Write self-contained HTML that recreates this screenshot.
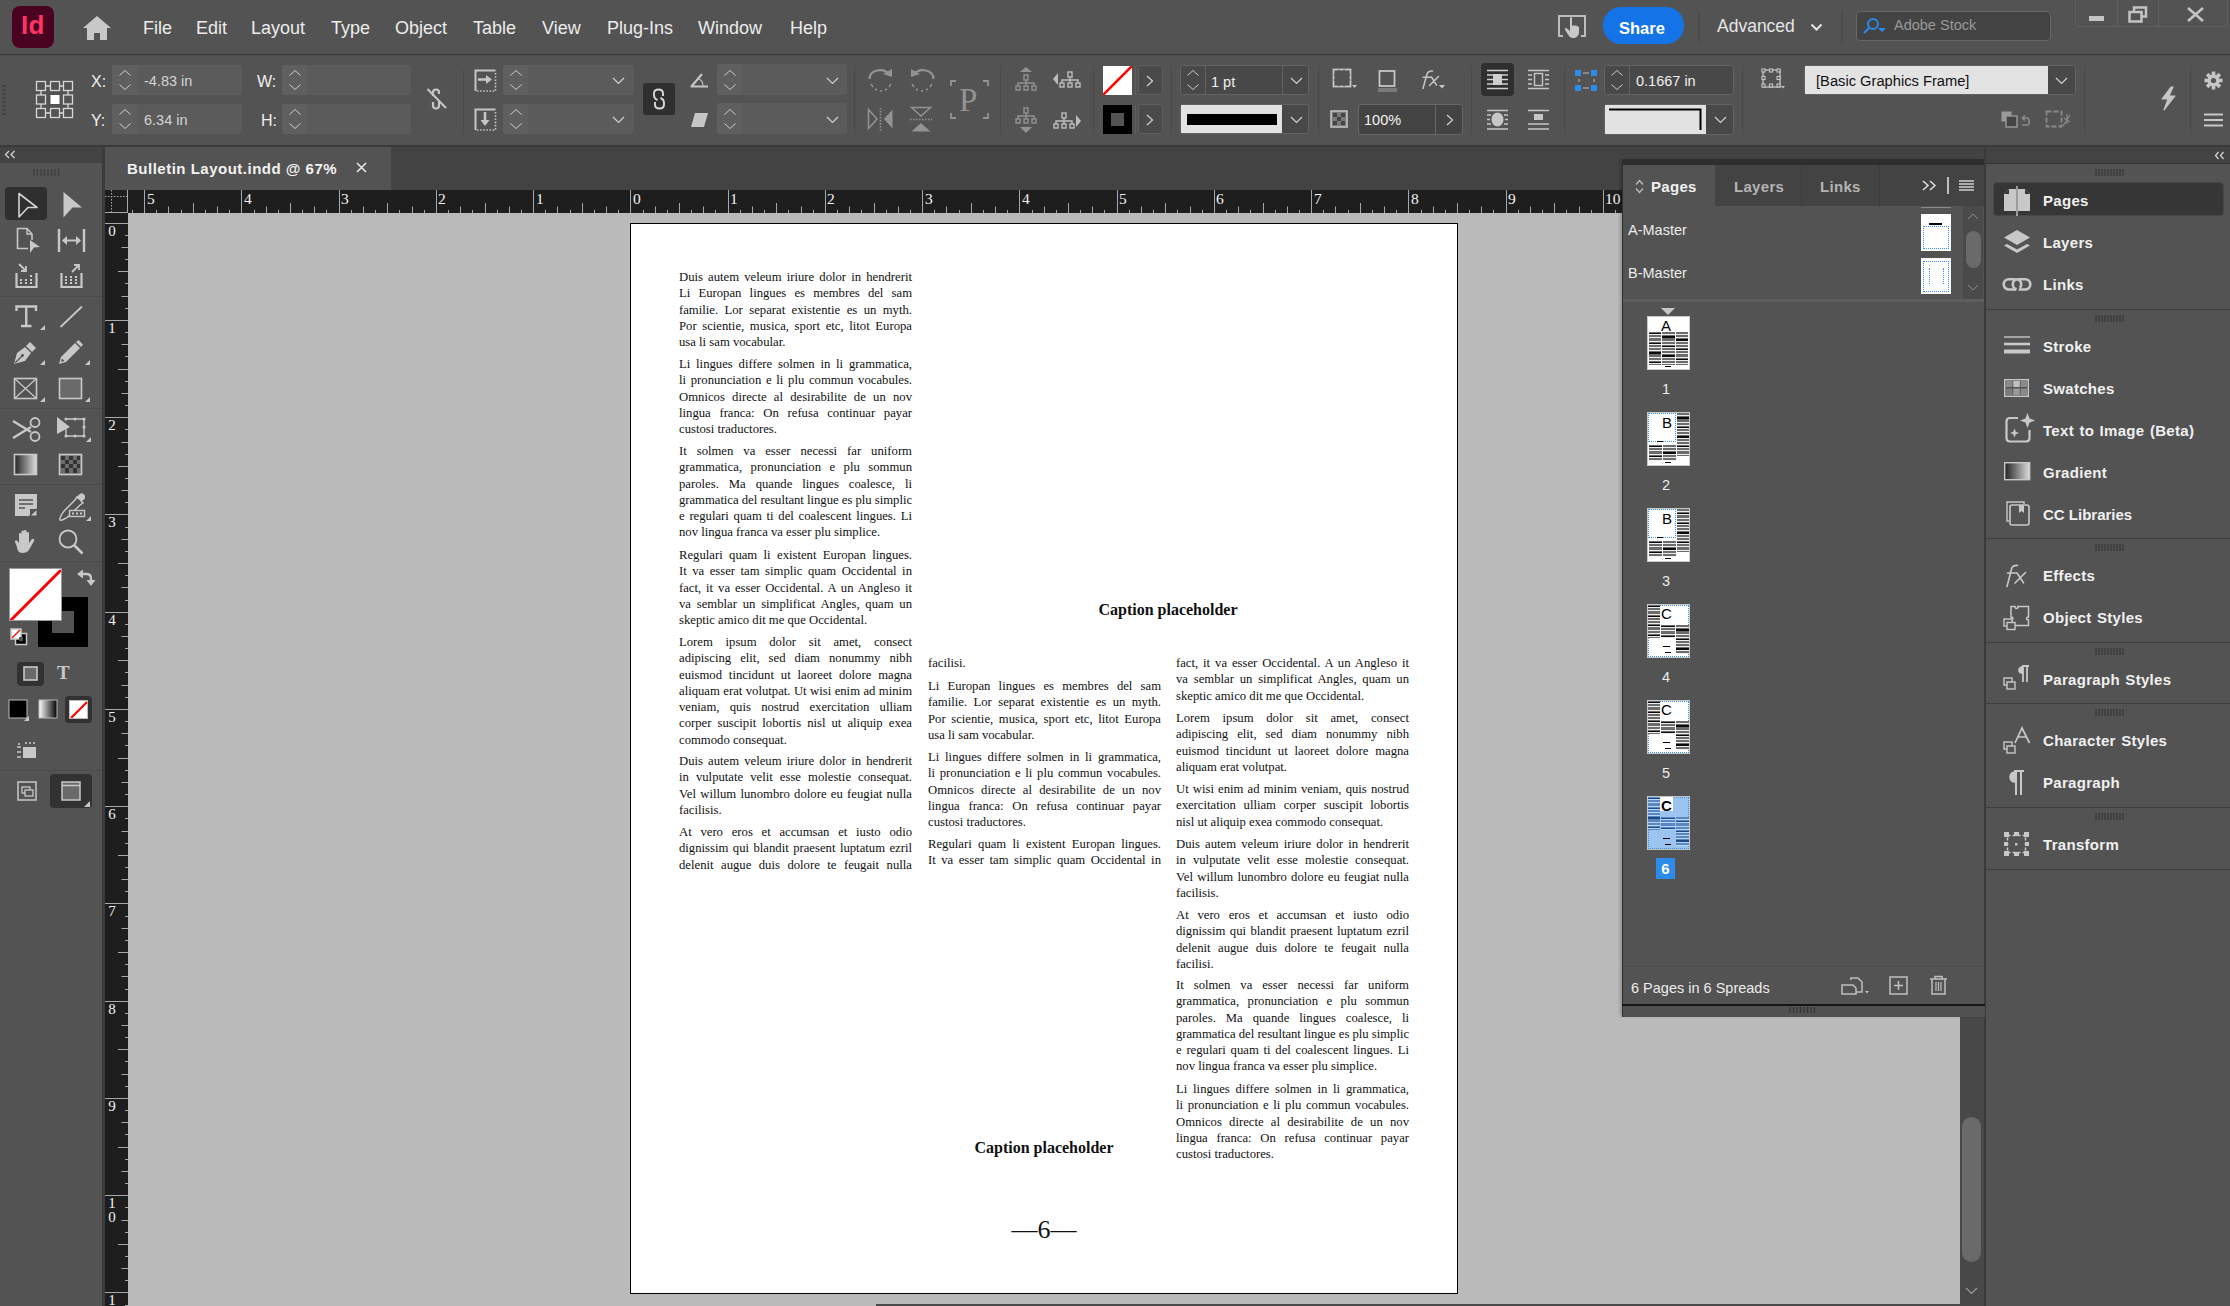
<!DOCTYPE html>
<html><head><meta charset="utf-8">
<style>
*{margin:0;padding:0;box-sizing:border-box}
html,body{width:2230px;height:1306px;overflow:hidden;background:#535353;font-family:"Liberation Sans",sans-serif;color:#e6e6e6}
.a{position:absolute}
.mi{position:absolute;top:18px;font-size:18px;color:#ececec;line-height:20px;white-space:nowrap}
.fld{position:absolute;background:#5b5b5b;border-radius:3px}
.spin{position:absolute;left:0;top:0;bottom:0;width:25px;background:#5f5f5f;border-radius:3px 0 0 3px}
.sep{position:absolute;width:1px;background:#4a4a4a}
.ico{position:absolute}
svg{position:absolute;overflow:visible}
.pg{position:absolute;font-family:"Liberation Serif",serif;color:#111;white-space:nowrap;font-size:12.7px;line-height:16px}
.j{text-align:justify;text-align-last:justify}
.dk{position:absolute;font-size:15px;font-weight:bold;color:#f0f0f0;white-space:nowrap;letter-spacing:0.3px;word-spacing:1px;margin-top:1px}
</style></head><body>
<!-- MENU BAR -->
<div class="a" style="left:0;top:0;width:2230px;height:54px;background:#535353"></div>
<div class="a" style="left:0;top:54px;width:2230px;height:1px;background:#383838"></div><div class="a" style="left:0;top:55px;width:2230px;height:1px;background:#4c4c4c"></div>
<div class="a" style="left:12px;top:6px;width:42px;height:42px;background:#49021f;border-radius:8px"></div>
<div class="a" style="left:21px;top:10px;font-size:26px;font-weight:bold;color:#ff3366;line-height:30px;letter-spacing:0.3px">Id</div>
<svg style="left:82px;top:15px" width="30" height="26" viewBox="0 0 30 26"><path d="M15 1 L1 13 L5 13 L5 25 L12 25 L12 18 L18 18 L18 25 L25 25 L25 13 L29 13 Z" fill="#c8c8c8"/></svg>
<div class="mi" style="left:143px">File</div>
<div class="mi" style="left:196px">Edit</div>
<div class="mi" style="left:251px">Layout</div>
<div class="mi" style="left:331px">Type</div>
<div class="mi" style="left:395px">Object</div>
<div class="mi" style="left:473px">Table</div>
<div class="mi" style="left:542px">View</div>
<div class="mi" style="left:607px">Plug-Ins</div>
<div class="mi" style="left:698px">Window</div>
<div class="mi" style="left:790px">Help</div>
<!-- right side -->
<svg style="left:1558px;top:14px" width="28" height="24" viewBox="0 0 28 24"><path d="M5 2 H1 V22 H5 M23 2 H27 V22 H23" stroke="#bdbdbd" stroke-width="2" fill="none"/><path d="M1 2 H27" stroke="#bdbdbd" stroke-width="2"/><path d="M12 4 C12 3 14 3 14 4 L14 12 C15 11 16 11 16.5 12 C17.5 11 18.5 11 19 12.5 C20 12 21 12.5 21 13.5 L21 18 C21 22 18 24 15 24 C12 24 11 22 9 19 L7 15.5 C6.5 14.5 7.5 13.5 8.5 14.3 L12 17 Z" fill="#c8c8c8"/></svg>
<div class="a" style="left:1603px;top:7px;width:81px;height:37px;background:#1473e6;border-radius:18px"></div>
<div class="a" style="left:1619px;top:18px;font-size:16.5px;font-weight:bold;color:#fff;line-height:20px">Share</div>
<div class="a" style="left:1698px;top:12px;width:2px;height:30px;background:#4b4b4b"></div>
<div class="a" style="left:1717px;top:16px;font-size:17.5px;color:#e6e6e6;line-height:20px">Advanced</div>
<svg style="left:1810px;top:23px" width="13" height="9" viewBox="0 0 13 9"><path d="M1.5 1.5 L6.5 6.5 L11.5 1.5" stroke="#e6e6e6" stroke-width="2" fill="none"/></svg>
<div class="a" style="left:1841px;top:12px;width:2px;height:30px;background:#4b4b4b"></div>
<div class="a" style="left:1856px;top:11px;width:195px;height:30px;background:#434343;border:1px solid #676767;border-radius:4px"></div>
<svg style="left:1863px;top:17px" width="26" height="18" viewBox="0 0 26 18"><circle cx="10" cy="7" r="5" stroke="#2b8ae8" stroke-width="2" fill="none"/><path d="M6.5 10.5 L1 16" stroke="#2b8ae8" stroke-width="2.2"/><path d="M15 11 L23 11 L19 15 Z" fill="#2b8ae8"/></svg>
<div class="a" style="left:1894px;top:16px;font-size:14.5px;color:#9a9a9a;line-height:18px">Adobe Stock</div>
<div class="a" style="left:2075px;top:-1px;width:153px;height:28px;border:1px solid #5f5f5f;border-radius:0 0 4px 4px"></div>
<div class="a" style="left:2117px;top:0;width:1px;height:27px;background:#5f5f5f"></div>
<div class="a" style="left:2158px;top:0;width:1px;height:27px;background:#5f5f5f"></div>
<div class="a" style="left:2089px;top:16px;width:15px;height:5px;background:#c4c4c4"></div>
<svg style="left:2128px;top:6px" width="20" height="17" viewBox="0 0 20 17"><rect x="6" y="1.5" width="12" height="9" stroke="#c4c4c4" stroke-width="2.5" fill="none"/><rect x="1.5" y="6" width="12" height="9.5" stroke="#c4c4c4" stroke-width="2.5" fill="#535353"/></svg>
<svg style="left:2186px;top:7px" width="19" height="15" viewBox="0 0 19 15"><path d="M2 1 L17 14 M17 1 L2 14" stroke="#c4c4c4" stroke-width="2.6"/></svg>
<!-- CONTROL BAR -->
<div class="a" style="left:0;top:56px;width:2230px;height:89px;background:#535353"></div>
<div class="a" style="left:0;top:145px;width:2230px;height:2px;background:#3a3a3a"></div>
<svg style="left:2px;top:85px" width="4" height="31" viewBox="0 0 4 31"><path d="M0.5 1 H3.5 M0.5 5 H3.5 M0.5 9 H3.5 M0.5 13 H3.5 M0.5 17 H3.5 M0.5 21 H3.5 M0.5 25 H3.5 M0.5 29 H3.5" stroke="#3f3f3f" stroke-width="1.3"/></svg>
<!-- reference point -->
<svg style="left:35px;top:80px" width="40" height="39" viewBox="0 0 40 39"><g stroke="#d8d8d8" stroke-width="1.3" fill="none"><rect x="1.5" y="1.5" width="9" height="9"/><rect x="15.5" y="1.5" width="9" height="9"/><rect x="28.5" y="1.5" width="9" height="9"/><rect x="1.5" y="15" width="9" height="9"/><rect x="28.5" y="15" width="9" height="9"/><rect x="1.5" y="28.5" width="9" height="9"/><rect x="15.5" y="28.5" width="9" height="9"/><rect x="28.5" y="28.5" width="9" height="9"/><path d="M10.5 6 H15.5 M24.5 6 H28.5 M10.5 33 H15.5 M24.5 33 H28.5 M6 10.5 V15 M6 24 V28.5 M33 10.5 V15 M33 24 V28.5"/></g><rect x="15.5" y="15" width="9" height="9" fill="#ffffff"/></svg>
<div class="a" style="left:91px;top:73px;font-size:16px;color:#f0f0f0">X:</div>
<div class="a" style="left:91px;top:112px;font-size:16px;color:#f0f0f0">Y:</div>
<div class="fld" style="left:112px;top:65px;width:130px;height:30px"><div class="spin"></div></div>
<div class="fld" style="left:112px;top:104px;width:130px;height:30px"><div class="spin"></div></div>
<svg style="left:118px;top:69px" width="14" height="22" viewBox="0 0 14 22"><path d="M1.5 6.5 L7 1.5 L12.5 6.5 M1.5 15.5 L7 20.5 L12.5 15.5" stroke="#cfcfcf" stroke-width="1" fill="none"/></svg>
<svg style="left:118px;top:108px" width="14" height="22" viewBox="0 0 14 22"><path d="M1.5 6.5 L7 1.5 L12.5 6.5 M1.5 15.5 L7 20.5 L12.5 15.5" stroke="#cfcfcf" stroke-width="1" fill="none"/></svg>
<div class="a" style="left:144px;top:72px;font-size:14.5px;color:#d4d4d4;line-height:18px">-4.83 in</div>
<div class="a" style="left:144px;top:111px;font-size:14.5px;color:#d4d4d4;line-height:18px">6.34 in</div>
<div class="a" style="left:257px;top:73px;font-size:16px;color:#f0f0f0">W:</div>
<div class="a" style="left:261px;top:112px;font-size:16px;color:#f0f0f0">H:</div>
<div class="fld" style="left:282px;top:65px;width:129px;height:30px"><div class="spin"></div></div>
<div class="fld" style="left:282px;top:104px;width:129px;height:30px"><div class="spin"></div></div>
<svg style="left:288px;top:69px" width="14" height="22" viewBox="0 0 14 22"><path d="M1.5 6.5 L7 1.5 L12.5 6.5 M1.5 15.5 L7 20.5 L12.5 15.5" stroke="#cfcfcf" stroke-width="1" fill="none"/></svg>
<svg style="left:288px;top:108px" width="14" height="22" viewBox="0 0 14 22"><path d="M1.5 6.5 L7 1.5 L12.5 6.5 M1.5 15.5 L7 20.5 L12.5 15.5" stroke="#cfcfcf" stroke-width="1" fill="none"/></svg>
<svg style="left:426px;top:86px" width="22" height="26" viewBox="0 0 22 26"><path d="M7 10 V6.5 C7 2.5 13 2.5 13 6.5 V8 M7 16 V19.5 C7 23.5 13 23.5 13 19.5 V15" stroke="#c6c6c6" stroke-width="2.2" fill="none"/><path d="M1.5 3 L20 22" stroke="#c6c6c6" stroke-width="2"/></svg>
<div class="sep" style="left:463px;top:70px;height:65px"></div>
<!-- scale -->
<svg style="left:474px;top:69px" width="24" height="24" viewBox="0 0 24 24"><path d="M1.5 22 V1.5 H21.5" stroke="#c6c6c6" stroke-width="2" fill="none"/><path d="M21.5 4 V22 H1.5" stroke="#c6c6c6" stroke-width="1.6" stroke-dasharray="1.6 1.6" fill="none"/><path d="M4 10.5 H13" stroke="#c6c6c6" stroke-width="2.6"/><path d="M12 6 L18 10.5 L12 15 Z" fill="#c6c6c6"/></svg>
<svg style="left:474px;top:108px" width="24" height="24" viewBox="0 0 24 24"><path d="M1.5 22 V1.5 H21.5" stroke="#c6c6c6" stroke-width="2" fill="none"/><path d="M21.5 4 V22 H1.5" stroke="#c6c6c6" stroke-width="1.6" stroke-dasharray="1.6 1.6" fill="none"/><path d="M11 4 V13" stroke="#c6c6c6" stroke-width="2.6"/><path d="M6.5 12 L11 18 L15.5 12 Z" fill="#c6c6c6"/></svg>
<div class="fld" style="left:503px;top:65px;width:131px;height:30px"><div class="spin"></div></div>
<div class="fld" style="left:503px;top:104px;width:131px;height:30px"><div class="spin"></div></div>
<svg style="left:509px;top:69px" width="14" height="22" viewBox="0 0 14 22"><path d="M1.5 6.5 L7 1.5 L12.5 6.5 M1.5 15.5 L7 20.5 L12.5 15.5" stroke="#cfcfcf" stroke-width="1" fill="none"/></svg>
<svg style="left:509px;top:108px" width="14" height="22" viewBox="0 0 14 22"><path d="M1.5 6.5 L7 1.5 L12.5 6.5 M1.5 15.5 L7 20.5 L12.5 15.5" stroke="#cfcfcf" stroke-width="1" fill="none"/></svg>
<svg style="left:612px;top:77px" width="13" height="8" viewBox="0 0 13 8"><path d="M1 1 L6.5 6.5 L12 1" stroke="#d0d0d0" stroke-width="1.2" fill="none"/></svg>
<svg style="left:612px;top:116px" width="13" height="8" viewBox="0 0 13 8"><path d="M1 1 L6.5 6.5 L12 1" stroke="#d0d0d0" stroke-width="1.2" fill="none"/></svg>
<div class="a" style="left:643px;top:83px;width:32px;height:32px;background:#2f2f2f;border-radius:3px"></div>
<svg style="left:652px;top:88px" width="14" height="22" viewBox="0 0 14 22"><path d="M5.5 12 C3 11 2 9.5 2 7 V5.5 C2 2.5 4 1.5 6.5 1.5 C9 1.5 11 2.5 11 5.5 V8" stroke="#d8d8d8" stroke-width="1.9" fill="none"/><path d="M8.5 10 C11 11 12 12.5 12 15 V16.5 C12 19.5 10 20.5 7.5 20.5 C5 20.5 3 19.5 3 16.5 V14" stroke="#d8d8d8" stroke-width="1.9" fill="none"/></svg>
<!-- rotate / shear -->
<svg style="left:690px;top:72px" width="19" height="16" viewBox="0 0 19 16"><path d="M1 15 L12 2 M1 14.5 H18" stroke="#c6c6c6" stroke-width="2.2" fill="none"/><path d="M8.5 7 C12 8 13 11 13 14" stroke="#c6c6c6" stroke-width="1.1" fill="none"/></svg>
<svg style="left:690px;top:112px" width="19" height="16" viewBox="0 0 19 16"><path d="M5 1 H18 L14 15 H1 Z" fill="#c6c6c6"/></svg>
<div class="fld" style="left:717px;top:64px;width:130px;height:31px"><div class="spin"></div></div>
<div class="fld" style="left:717px;top:103px;width:130px;height:31px"><div class="spin"></div></div>
<svg style="left:723px;top:69px" width="14" height="22" viewBox="0 0 14 22"><path d="M1.5 6.5 L7 1.5 L12.5 6.5 M1.5 15.5 L7 20.5 L12.5 15.5" stroke="#cfcfcf" stroke-width="1" fill="none"/></svg>
<svg style="left:723px;top:108px" width="14" height="22" viewBox="0 0 14 22"><path d="M1.5 6.5 L7 1.5 L12.5 6.5 M1.5 15.5 L7 20.5 L12.5 15.5" stroke="#cfcfcf" stroke-width="1" fill="none"/></svg>
<svg style="left:826px;top:77px" width="13" height="8" viewBox="0 0 13 8"><path d="M1 1 L6.5 6.5 L12 1" stroke="#d0d0d0" stroke-width="1.2" fill="none"/></svg>
<svg style="left:826px;top:116px" width="13" height="8" viewBox="0 0 13 8"><path d="M1 1 L6.5 6.5 L12 1" stroke="#d0d0d0" stroke-width="1.2" fill="none"/></svg>
<div class="sep" style="left:854px;top:65px;height:70px"></div>
<!-- rotate cw / ccw / flip -->
<svg style="left:868px;top:67px" width="26" height="26" viewBox="0 0 26 26"><path d="M1.5 12 C1.5 3 15 0 21 7" stroke="#939393" stroke-width="2.2" fill="none"/><path d="M15 7 L24 2 L24 10 Z" fill="#939393"/><path d="M3 17 L5 20 M7 22 L9 23 M12 24 H14 M17 23 L19 22 M21 20 L23 17" stroke="#939393" stroke-width="1.4"/></svg>
<svg style="left:909px;top:67px" width="26" height="26" viewBox="0 0 26 26"><path d="M24.5 12 C24.5 3 11 0 5 7" stroke="#939393" stroke-width="2.2" fill="none"/><path d="M11 7 L2 2 L2 10 Z" fill="#939393"/><path d="M23 17 L21 20 M19 22 L17 23 M14 24 H12 M9 23 L7 22 M5 20 L3 17" stroke="#939393" stroke-width="1.4"/></svg>
<svg style="left:867px;top:107px" width="27" height="25" viewBox="0 0 27 25"><path d="M1.5 2.5 L10 12 L1.5 21.5 Z" stroke="#939393" stroke-width="1.5" fill="none"/><path d="M25.5 2.5 L17 12 L25.5 21.5 Z" fill="#939393"/><path d="M13.5 1 V24" stroke="#939393" stroke-width="1.6" stroke-dasharray="1.5 1.5"/></svg>
<svg style="left:909px;top:106px" width="24" height="27" viewBox="0 0 24 27"><path d="M2.5 1.5 L12 10 L21.5 1.5 Z" stroke="#939393" stroke-width="1.5" fill="none"/><path d="M2.5 25.5 L12 17 L21.5 25.5 Z" fill="#939393"/><path d="M1 13.5 H23" stroke="#939393" stroke-width="1.6" stroke-dasharray="1.5 1.5"/></svg>
<svg style="left:950px;top:80px" width="39" height="39" viewBox="0 0 39 39"><path d="M1 6 V1 H6 M33 1 H38 V6 M1 33 V38 H6 M33 38 H38 V33" stroke="#939393" stroke-width="1.8" fill="none"/></svg>
<div class="a" style="left:959px;top:83px;font-family:'Liberation Serif',serif;font-size:33px;color:#939393;line-height:34px">P</div>
<div class="sep" style="left:1000px;top:65px;height:70px"></div>
<!-- select container -->
<svg style="left:1015px;top:67px" width="22" height="27" viewBox="0 0 22 27"><path d="M5 5 L11 0 L17 5 Z" fill="#939393"/><g stroke="#939393" stroke-width="1.4" fill="none"><rect x="9" y="8" width="4" height="5"/><path d="M11 13 V16 M3 19 V16 H19 V19 M11 16 V19"/><rect x="1" y="19" width="4" height="4"/><rect x="9" y="19" width="4" height="4"/><rect x="17" y="19" width="4" height="4"/></g></svg>
<svg style="left:1053px;top:71px" width="30" height="18" viewBox="0 0 30 18"><path d="M5 2 L0 8 L5 14 Z" fill="#bdbdbd"/><g stroke="#bdbdbd" stroke-width="1.4" fill="none"><rect x="15" y="1" width="4" height="5"/><path d="M17 6 V9 M9 12 V9 H25 V12 M17 9 V12"/><rect x="7" y="12" width="4" height="4"/><rect x="15" y="12" width="4" height="4"/><rect x="23" y="12" width="4" height="4"/></g></svg>
<svg style="left:1015px;top:107px" width="22" height="27" viewBox="0 0 22 27"><g stroke="#939393" stroke-width="1.4" fill="none"><rect x="9" y="1" width="4" height="5"/><path d="M11 6 V9 M3 12 V9 H19 V12 M11 9 V12"/><rect x="1" y="12" width="4" height="4"/><rect x="9" y="12" width="4" height="4"/><rect x="17" y="12" width="4" height="4"/></g><path d="M5 20 L11 26 L17 20 Z" fill="#939393"/></svg>
<svg style="left:1053px;top:112px" width="30" height="18" viewBox="0 0 30 18"><g stroke="#bdbdbd" stroke-width="1.4" fill="none"><rect x="9" y="1" width="4" height="5"/><path d="M11 6 V9 M3 12 V9 H19 V12 M11 9 V12"/><rect x="1" y="12" width="4" height="4"/><rect x="9" y="12" width="4" height="4"/><rect x="17" y="12" width="4" height="4"/></g><path d="M23 3 L28 9 L23 15 Z" fill="#bdbdbd"/></svg>
<div class="sep" style="left:1093px;top:65px;height:70px"></div>
<!-- fill/stroke -->
<div class="a" style="left:1103px;top:66px;width:29px;height:29px;background:#fff;overflow:hidden"><svg style="left:0;top:0" width="29" height="29"><path d="M0 29 L29 0" stroke="#ff0000" stroke-width="2.6"/></svg></div>
<div class="a" style="left:1135px;top:66px;width:1px;height:29px;background:#5e5e5e"></div>
<div class="a" style="left:1138px;top:65px;width:25px;height:30px;background:#4a4a4a;border:1px solid #5f5f5f;border-radius:3px"></div>
<svg style="left:1146px;top:75px" width="8" height="12" viewBox="0 0 8 12"><path d="M1 1 L6.5 6 L1 11" stroke="#d0d0d0" stroke-width="1.2" fill="none"/></svg>
<div class="a" style="left:1103px;top:105px;width:29px;height:29px;background:#000"></div>
<div class="a" style="left:1111px;top:113px;width:13px;height:13px;background:#535353"></div>
<div class="a" style="left:1135px;top:105px;width:1px;height:29px;background:#5e5e5e"></div>
<div class="a" style="left:1138px;top:104px;width:25px;height:30px;background:#4a4a4a;border:1px solid #5f5f5f;border-radius:3px"></div>
<svg style="left:1146px;top:114px" width="8" height="12" viewBox="0 0 8 12"><path d="M1 1 L6.5 6 L1 11" stroke="#d0d0d0" stroke-width="1.2" fill="none"/></svg>
<div class="sep" style="left:1171px;top:65px;height:70px"></div>
<!-- stroke weight -->
<div class="a" style="left:1180px;top:65px;width:129px;height:30px;background:#484848;border:1px solid #626262;border-radius:3px"></div>
<div class="a" style="left:1205px;top:66px;width:1px;height:28px;background:#626262"></div>
<div class="a" style="left:1282px;top:66px;width:1px;height:28px;background:#626262"></div>
<svg style="left:1186px;top:69px" width="14" height="22" viewBox="0 0 14 22"><path d="M1.5 6.5 L7 1.5 L12.5 6.5 M1.5 15.5 L7 20.5 L12.5 15.5" stroke="#cfcfcf" stroke-width="1" fill="none"/></svg>
<div class="a" style="left:1211px;top:72.5px;font-size:14.5px;color:#f0f0f0;line-height:18px">1 pt</div>
<svg style="left:1290px;top:77px" width="13" height="8" viewBox="0 0 13 8"><path d="M1 1 L6.5 6.5 L12 1" stroke="#d0d0d0" stroke-width="1.2" fill="none"/></svg>
<div class="a" style="left:1180px;top:104px;width:129px;height:30px;background:#484848;border:1px solid #626262;border-radius:3px"></div>
<div class="a" style="left:1181px;top:105px;width:101px;height:28px;background:#e2e2e2"></div>
<div class="a" style="left:1187px;top:114px;width:90px;height:11px;background:#000"></div>
<svg style="left:1290px;top:116px" width="13" height="8" viewBox="0 0 13 8"><path d="M1 1 L6.5 6.5 L12 1" stroke="#d0d0d0" stroke-width="1.2" fill="none"/></svg>
<div class="sep" style="left:1318px;top:65px;height:70px"></div>
<!-- frame fitting / shadow / fx -->
<svg style="left:1332px;top:68px" width="26" height="22" viewBox="0 0 26 22"><rect x="1.5" y="1.5" width="17" height="17" stroke="#c6c6c6" stroke-width="1.8" fill="none"/><path d="M7 1.5 V3.5 M12 1.5 V3.5 M7 18.5 V16.5 M12 18.5 V16.5 M1.5 7 H3.5 M1.5 12 H3.5 M18.5 7 H16.5 M18.5 12 H16.5" stroke="#535353" stroke-width="1.2"/><path d="M20 17 L25 17 L22.5 20 Z" fill="#c6c6c6"/></svg>
<svg style="left:1377px;top:69px" width="22" height="25" viewBox="0 0 22 25"><rect x="2.5" y="2" width="15" height="15" stroke="#c6c6c6" stroke-width="1.8" fill="none"/><rect x="1" y="19" width="19" height="4" fill="#7a7a7a"/></svg>
<svg style="left:1420px;top:69px" width="25" height="21" viewBox="0 0 25 21"><path d="M3 19.5 L7 5 C7.8 2.5 9.5 1.8 12.5 2 M3.2 8.2 H11 M9.5 16.5 L18.5 7.5 M11.5 8 L16.5 16.2" stroke="#c6c6c6" stroke-width="1.5" fill="none" stroke-linecap="round"/></svg>
<svg style="left:1439px;top:85px" width="6" height="4" viewBox="0 0 6 4"><path d="M0 0 L6 0 L3 3.5 Z" fill="#c6c6c6"/></svg>
<svg style="left:1330px;top:110px" width="18" height="18" viewBox="0 0 18 18"><rect x="1" y="1" width="16" height="16" stroke="#c6c6c6" stroke-width="1.5" fill="#7a7a7a"/><path d="M3 3 H7 V7 H3 Z M11 3 H15 V7 H11 Z M7 7 H11 V11 H7 Z M3 11 H7 V15 H3 Z M11 11 H15 V15 H11 Z" fill="#444"/></svg>
<div class="a" style="left:1358px;top:104px;width:105px;height:31px;background:#434343;border:1px solid #666;border-radius:3px"></div>
<div class="a" style="left:1435px;top:105px;width:1px;height:29px;background:#666"></div>
<div class="a" style="left:1364px;top:111px;font-size:14.5px;color:#f4f4f4;line-height:18px">100%</div>
<svg style="left:1446px;top:114px" width="8" height="12" viewBox="0 0 8 12"><path d="M1 1 L6.5 6 L1 11" stroke="#d0d0d0" stroke-width="1.2" fill="none"/></svg>
<div class="sep" style="left:1471px;top:65px;height:70px"></div>
<!-- text wrap -->
<div class="a" style="left:1481px;top:63px;width:33px;height:33px;background:#2f2f2f;border-radius:4px"></div>
<svg style="left:1486px;top:69px" width="23" height="22" viewBox="0 0 23 22"><path d="M1 1.5 H22 M1 6 H22 M1 10.5 H22 M1 15 H22 M1 19.5 H22" stroke="#d0d0d0" stroke-width="1.4"/><rect x="7" y="5" width="9" height="11" fill="#d0d0d0"/></svg>
<svg style="left:1527px;top:69px" width="23" height="22" viewBox="0 0 23 22"><path d="M1 1.5 H22 M1 19.5 H22 M1 6 H5 M18 6 H22 M1 10.5 H5 M18 10.5 H22 M1 15 H5 M18 15 H22" stroke="#c6c6c6" stroke-width="1.4"/><rect x="7.5" y="4.5" width="8" height="12" stroke="#c6c6c6" stroke-width="1.4" fill="none"/></svg>
<svg style="left:1486px;top:109px" width="23" height="22" viewBox="0 0 23 22"><path d="M1 1.5 H22 M1 20 H22 M1 6 H5 M18 6 H22 M1 10.5 H4 M19 10.5 H22 M1 15 H5 M18 15 H22" stroke="#c6c6c6" stroke-width="1.4"/><ellipse cx="11.5" cy="10.5" rx="6" ry="7" fill="#c6c6c6"/></svg>
<svg style="left:1527px;top:109px" width="23" height="22" viewBox="0 0 23 22"><path d="M1 1.5 H22 M1 15 H22 M1 20 H22" stroke="#c6c6c6" stroke-width="1.4"/><rect x="7" y="5" width="9" height="6" fill="#c6c6c6"/></svg>
<div class="sep" style="left:1564px;top:65px;height:70px"></div>
<svg style="left:1575px;top:70px" width="23" height="23" viewBox="0 0 23 23"><rect x="0" y="0" width="6" height="6" fill="#2d8ceb"/><rect x="16" y="0" width="6" height="6" fill="#2d8ceb"/><rect x="0" y="15" width="6" height="6" fill="#2d8ceb"/><rect x="16" y="15" width="6" height="6" fill="#2d8ceb"/><path d="M8 3 H14 M8 18 H14 M4 9 V12 M19 9 V12" stroke="#8a8a8a" stroke-width="2"/></svg>
<div class="a" style="left:1604px;top:65px;width:130px;height:30px;background:#484848;border:1px solid #626262;border-radius:3px"></div>
<div class="a" style="left:1629px;top:66px;width:1px;height:28px;background:#626262"></div>
<svg style="left:1610px;top:69px" width="14" height="22" viewBox="0 0 14 22"><path d="M1.5 6.5 L7 1.5 L12.5 6.5 M1.5 15.5 L7 20.5 L12.5 15.5" stroke="#cfcfcf" stroke-width="1" fill="none"/></svg>
<div class="a" style="left:1636px;top:72px;font-size:14.5px;color:#f0f0f0;line-height:18px">0.1667 in</div>
<div class="a" style="left:1604px;top:104px;width:130px;height:31px;background:#484848;border:1px solid #626262;border-radius:3px"></div>
<div class="a" style="left:1605px;top:105px;width:101px;height:29px;background:#e2e2e2"></div>
<svg style="left:1608px;top:108px" width="95" height="24" viewBox="0 0 95 24"><path d="M1 1.5 H92.5 V22" stroke="#000" stroke-width="2" fill="none"/></svg>
<svg style="left:1714px;top:116px" width="13" height="8" viewBox="0 0 13 8"><path d="M1 1 L6.5 6.5 L12 1" stroke="#d0d0d0" stroke-width="1.2" fill="none"/></svg>
<div class="sep" style="left:1742px;top:65px;height:70px"></div>
<svg style="left:1762px;top:69px" width="24" height="21" viewBox="0 0 24 21"><g stroke="#c6c6c6" stroke-width="1.3" fill="none"><rect x="1" y="1" width="17" height="17"/></g><g fill="#535353" stroke="#c6c6c6" stroke-width="1.1"><rect x="0" y="0" width="3" height="3"/><rect x="7.5" y="0" width="3" height="3"/><rect x="15" y="0" width="3" height="3"/><rect x="0" y="7.5" width="3" height="3"/><rect x="15" y="7.5" width="3" height="3"/><rect x="0" y="15" width="3" height="3"/><rect x="7.5" y="15" width="3" height="3"/><rect x="15" y="15" width="3" height="3"/></g><path d="M19 17 L23 17 L21 19.5 Z" fill="#c6c6c6"/></svg>
<div class="a" style="left:1804px;top:65px;width:272px;height:30px;background:#484848;border:1px solid #626262;border-radius:3px"></div>
<div class="a" style="left:1805px;top:66px;width:243px;height:28px;background:#e3e3e3"></div>
<div class="a" style="left:1816px;top:72px;font-size:14.7px;color:#111;line-height:18px">[Basic Graphics Frame]</div>
<svg style="left:2055px;top:77px" width="13" height="8" viewBox="0 0 13 8"><path d="M1 1 L6.5 6.5 L12 1" stroke="#d0d0d0" stroke-width="1.2" fill="none"/></svg>
<svg style="left:2000px;top:110px" width="32" height="20" viewBox="0 0 32 20"><rect x="1" y="1" width="11" height="11" fill="#9a9a9a" stroke="#555" stroke-width="1"/><rect x="6" y="6" width="11" height="11" fill="#444" stroke="#9a9a9a" stroke-width="1.4"/><path d="M22 8 H27 C30 8 30 15 27 15 H22 M22 8 L25 5.5 M22 8 L25 10.5" stroke="#8a8a8a" stroke-width="1.6" fill="none"/></svg>
<svg style="left:2045px;top:110px" width="27" height="20" viewBox="0 0 27 20"><rect x="1.5" y="1.5" width="15" height="15" stroke="#8a8a8a" stroke-width="1.8" fill="none" stroke-dasharray="5 2"/><path d="M18 16 L25 5 M19 8 L25 12 M22 4 V14" stroke="#8a8a8a" stroke-width="1.2"/></svg>
<div class="sep" style="left:2084px;top:65px;height:70px"></div>
<svg style="left:2159px;top:86px" width="19" height="25" viewBox="0 0 19 25"><path d="M12 1 L3 13 L9 13 L5 24 L16 10 L10 10 L14 1 Z" stroke="#c6c6c6" stroke-width="1.2" fill="#c6c6c6" stroke-linejoin="round"/></svg>
<div class="sep" style="left:2190px;top:65px;height:70px"></div>
<svg style="left:2204px;top:71px" width="19" height="19" viewBox="0 0 19 19"><g transform="translate(9.5 9.5)"><circle r="6" fill="#c6c6c6"/><g fill="#c6c6c6"><rect x="-1.8" y="-9" width="3.6" height="18"/><rect x="-9" y="-1.8" width="18" height="3.6"/><rect x="-1.8" y="-9" width="3.6" height="18" transform="rotate(45)"/><rect x="-1.8" y="-9" width="3.6" height="18" transform="rotate(-45)"/></g><circle r="2.6" fill="#535353"/></g></svg>
<svg style="left:2204px;top:113px" width="19" height="14" viewBox="0 0 19 14"><path d="M0 1.5 H19 M0 7 H19 M0 12.5 H19" stroke="#c6c6c6" stroke-width="1.8"/></svg>
<!-- DOC AREA -->
<div class="a" style="left:105px;top:147px;width:1880px;height:43px;background:#434343"></div>
<div class="a" style="left:105px;top:147px;width:286px;height:43px;background:#535353"></div>
<div class="a" style="left:127px;top:160px;font-size:15px;font-weight:bold;color:#f2f2f2;line-height:18px;letter-spacing:0.5px">Bulletin Layout.indd @ 67%</div>
<svg style="left:356px;top:162px" width="11" height="11" viewBox="0 0 11 11"><path d="M1 1 L10 10 M10 1 L1 10" stroke="#e8e8e8" stroke-width="1.6"/></svg>
<div class="a" style="left:128px;top:213px;width:1832px;height:1093px;background:#bababa"></div>
<div class="a" style="left:876px;top:1304px;width:1084px;height:2px;background:#4a4a4a"></div>
<div class="a" style="left:630px;top:223px;width:828px;height:1071px;background:#fff;border:1px solid #000"></div>
<!-- doc scrollbar -->
<div class="a" style="left:1960px;top:1016px;width:24px;height:290px;background:#484848"></div>
<div class="a" style="left:1962px;top:1117px;width:19px;height:145px;background:#6a6a6a;border-radius:10px"></div>
<svg style="left:1965px;top:1287px" width="13" height="8" viewBox="0 0 13 8"><path d="M1 1 L6.5 6.5 L12 1" stroke="#9a9a9a" stroke-width="1.2" fill="none"/></svg>
<div class="a" style="left:1984px;top:147px;width:2px;height:1159px;background:#3a3a3a"></div>
<!-- RULERS -->
<div class="a" style="left:105px;top:190px;width:1517px;height:23px;background:#1e1e1e"></div>
<div class="a" style="left:105px;top:190px;width:23px;height:1116px;background:#1e1e1e"></div>
<svg style="left:128px;top:190px" width="1494" height="23"><path d="M4.5 20 V23 M16.5 0 V23 M28.5 20 V23 M40.5 16.5 V23 M53.5 20 V23 M65.5 13 V23 M77.5 20 V23 M89.5 16.5 V23 M101.5 20 V23 M113.5 0 V23 M126.5 20 V23 M138.5 16.5 V23 M150.5 20 V23 M162.5 13 V23 M174.5 20 V23 M186.5 16.5 V23 M198.5 20 V23 M211.5 0 V23 M223.5 20 V23 M235.5 16.5 V23 M247.5 20 V23 M259.5 13 V23 M271.5 20 V23 M284.5 16.5 V23 M296.5 20 V23 M308.5 0 V23 M320.5 20 V23 M332.5 16.5 V23 M344.5 20 V23 M357.5 13 V23 M369.5 20 V23 M381.5 16.5 V23 M393.5 20 V23 M405.5 0 V23 M417.5 20 V23 M429.5 16.5 V23 M442.5 20 V23 M454.5 13 V23 M466.5 20 V23 M478.5 16.5 V23 M490.5 20 V23 M502.5 0 V23 M515.5 20 V23 M527.5 16.5 V23 M539.5 20 V23 M551.5 13 V23 M563.5 20 V23 M575.5 16.5 V23 M587.5 20 V23 M600.5 0 V23 M612.5 20 V23 M624.5 16.5 V23 M636.5 20 V23 M648.5 13 V23 M660.5 20 V23 M673.5 16.5 V23 M685.5 20 V23 M697.5 0 V23 M709.5 20 V23 M721.5 16.5 V23 M733.5 20 V23 M746.5 13 V23 M758.5 20 V23 M770.5 16.5 V23 M782.5 20 V23 M794.5 0 V23 M806.5 20 V23 M818.5 16.5 V23 M831.5 20 V23 M843.5 13 V23 M855.5 20 V23 M867.5 16.5 V23 M879.5 20 V23 M891.5 0 V23 M904.5 20 V23 M916.5 16.5 V23 M928.5 20 V23 M940.5 13 V23 M952.5 20 V23 M964.5 16.5 V23 M976.5 20 V23 M989.5 0 V23 M1001.5 20 V23 M1013.5 16.5 V23 M1025.5 20 V23 M1037.5 13 V23 M1049.5 20 V23 M1062.5 16.5 V23 M1074.5 20 V23 M1086.5 0 V23 M1098.5 20 V23 M1110.5 16.5 V23 M1122.5 20 V23 M1135.5 13 V23 M1147.5 20 V23 M1159.5 16.5 V23 M1171.5 20 V23 M1183.5 0 V23 M1195.5 20 V23 M1207.5 16.5 V23 M1220.5 20 V23 M1232.5 13 V23 M1244.5 20 V23 M1256.5 16.5 V23 M1268.5 20 V23 M1280.5 0 V23 M1293.5 20 V23 M1305.5 16.5 V23 M1317.5 20 V23 M1329.5 13 V23 M1341.5 20 V23 M1353.5 16.5 V23 M1365.5 20 V23 M1378.5 0 V23 M1390.5 20 V23 M1402.5 16.5 V23 M1414.5 20 V23 M1426.5 13 V23 M1438.5 20 V23 M1451.5 16.5 V23 M1463.5 20 V23 M1475.5 0 V23 M1487.5 20 V23" stroke="#a8a8a8" stroke-width="1"/></svg>
<svg style="left:105px;top:213px" width="23" height="1093"><path d="M0 10.5 H23 M20 22.5 H23 M16.5 34.5 H23 M20 46.5 H23 M13 58.5 H23 M20 70.5 H23 M16.5 83.5 H23 M20 95.5 H23 M0 107.5 H23 M20 119.5 H23 M16.5 131.5 H23 M20 143.5 H23 M13 156.5 H23 M20 168.5 H23 M16.5 180.5 H23 M20 192.5 H23 M0 204.5 H23 M20 216.5 H23 M16.5 229.5 H23 M20 241.5 H23 M13 253.5 H23 M20 265.5 H23 M16.5 277.5 H23 M20 289.5 H23 M0 301.5 H23 M20 314.5 H23 M16.5 326.5 H23 M20 338.5 H23 M13 350.5 H23 M20 362.5 H23 M16.5 374.5 H23 M20 387.5 H23 M0 399.5 H23 M20 411.5 H23 M16.5 423.5 H23 M20 435.5 H23 M13 447.5 H23 M20 459.5 H23 M16.5 472.5 H23 M20 484.5 H23 M0 496.5 H23 M20 508.5 H23 M16.5 520.5 H23 M20 532.5 H23 M13 545.5 H23 M20 557.5 H23 M16.5 569.5 H23 M20 581.5 H23 M0 593.5 H23 M20 605.5 H23 M16.5 618.5 H23 M20 630.5 H23 M13 642.5 H23 M20 654.5 H23 M16.5 666.5 H23 M20 678.5 H23 M0 690.5 H23 M20 703.5 H23 M16.5 715.5 H23 M20 727.5 H23 M13 739.5 H23 M20 751.5 H23 M16.5 763.5 H23 M20 776.5 H23 M0 788.5 H23 M20 800.5 H23 M16.5 812.5 H23 M20 824.5 H23 M13 836.5 H23 M20 848.5 H23 M16.5 861.5 H23 M20 873.5 H23 M0 885.5 H23 M20 897.5 H23 M16.5 909.5 H23 M20 921.5 H23 M13 934.5 H23 M20 946.5 H23 M16.5 958.5 H23 M20 970.5 H23 M0 982.5 H23 M20 994.5 H23 M16.5 1007.5 H23 M20 1019.5 H23 M13 1031.5 H23 M20 1043.5 H23 M16.5 1055.5 H23 M20 1067.5 H23 M0 1079.5 H23 M20 1092.5 H23" stroke="#a8a8a8" stroke-width="1"/></svg>
<div class="a" style="left:147px;top:190px;font-family:Liberation Serif,serif;font-size:15.5px;color:#f2f2f2;line-height:17px">5</div>
<div class="a" style="left:244px;top:190px;font-family:Liberation Serif,serif;font-size:15.5px;color:#f2f2f2;line-height:17px">4</div>
<div class="a" style="left:341px;top:190px;font-family:Liberation Serif,serif;font-size:15.5px;color:#f2f2f2;line-height:17px">3</div>
<div class="a" style="left:438px;top:190px;font-family:Liberation Serif,serif;font-size:15.5px;color:#f2f2f2;line-height:17px">2</div>
<div class="a" style="left:536px;top:190px;font-family:Liberation Serif,serif;font-size:15.5px;color:#f2f2f2;line-height:17px">1</div>
<div class="a" style="left:633px;top:190px;font-family:Liberation Serif,serif;font-size:15.5px;color:#f2f2f2;line-height:17px">0</div>
<div class="a" style="left:730px;top:190px;font-family:Liberation Serif,serif;font-size:15.5px;color:#f2f2f2;line-height:17px">1</div>
<div class="a" style="left:827px;top:190px;font-family:Liberation Serif,serif;font-size:15.5px;color:#f2f2f2;line-height:17px">2</div>
<div class="a" style="left:925px;top:190px;font-family:Liberation Serif,serif;font-size:15.5px;color:#f2f2f2;line-height:17px">3</div>
<div class="a" style="left:1022px;top:190px;font-family:Liberation Serif,serif;font-size:15.5px;color:#f2f2f2;line-height:17px">4</div>
<div class="a" style="left:1119px;top:190px;font-family:Liberation Serif,serif;font-size:15.5px;color:#f2f2f2;line-height:17px">5</div>
<div class="a" style="left:1216px;top:190px;font-family:Liberation Serif,serif;font-size:15.5px;color:#f2f2f2;line-height:17px">6</div>
<div class="a" style="left:1314px;top:190px;font-family:Liberation Serif,serif;font-size:15.5px;color:#f2f2f2;line-height:17px">7</div>
<div class="a" style="left:1411px;top:190px;font-family:Liberation Serif,serif;font-size:15.5px;color:#f2f2f2;line-height:17px">8</div>
<div class="a" style="left:1508px;top:190px;font-family:Liberation Serif,serif;font-size:15.5px;color:#f2f2f2;line-height:17px">9</div>
<div class="a" style="left:1605px;top:190px;font-family:Liberation Serif,serif;font-size:15.5px;color:#f2f2f2;line-height:17px">10</div>
<div class="a" style="left:106px;top:225px;font-family:Liberation Serif,serif;font-size:15px;color:#f2f2f2;line-height:13.5px;width:12px;text-align:center">0</div>
<div class="a" style="left:106px;top:322px;font-family:Liberation Serif,serif;font-size:15px;color:#f2f2f2;line-height:13.5px;width:12px;text-align:center">1</div>
<div class="a" style="left:106px;top:419px;font-family:Liberation Serif,serif;font-size:15px;color:#f2f2f2;line-height:13.5px;width:12px;text-align:center">2</div>
<div class="a" style="left:106px;top:516px;font-family:Liberation Serif,serif;font-size:15px;color:#f2f2f2;line-height:13.5px;width:12px;text-align:center">3</div>
<div class="a" style="left:106px;top:614px;font-family:Liberation Serif,serif;font-size:15px;color:#f2f2f2;line-height:13.5px;width:12px;text-align:center">4</div>
<div class="a" style="left:106px;top:711px;font-family:Liberation Serif,serif;font-size:15px;color:#f2f2f2;line-height:13.5px;width:12px;text-align:center">5</div>
<div class="a" style="left:106px;top:808px;font-family:Liberation Serif,serif;font-size:15px;color:#f2f2f2;line-height:13.5px;width:12px;text-align:center">6</div>
<div class="a" style="left:106px;top:905px;font-family:Liberation Serif,serif;font-size:15px;color:#f2f2f2;line-height:13.5px;width:12px;text-align:center">7</div>
<div class="a" style="left:106px;top:1003px;font-family:Liberation Serif,serif;font-size:15px;color:#f2f2f2;line-height:13.5px;width:12px;text-align:center">8</div>
<div class="a" style="left:106px;top:1100px;font-family:Liberation Serif,serif;font-size:15px;color:#f2f2f2;line-height:13.5px;width:12px;text-align:center">9</div>
<div class="a" style="left:106px;top:1197px;font-family:Liberation Serif,serif;font-size:15px;color:#f2f2f2;line-height:13.5px;width:12px;text-align:center">1<br>0</div>
<div class="a" style="left:106px;top:1294px;font-family:Liberation Serif,serif;font-size:15px;color:#f2f2f2;line-height:13.5px;width:12px;text-align:center">1<br>1</div>
<svg style="left:105px;top:190px" width="23" height="23"><path d="M0 6.5 H22 M6.5 0 V22" stroke="#a8a8a8" stroke-width="1" stroke-dasharray="1.5 1.5"/><path d="M0 22.5 H23 M22.5 0 V23" stroke="#a8a8a8" stroke-width="1"/></svg>
<!-- LEFT TOOLBAR -->
<div class="a" style="left:0;top:147px;width:102px;height:1159px;background:#535353"></div>
<div class="a" style="left:0;top:147px;width:102px;height:16px;background:#434343"></div>
<svg style="left:4px;top:150px" width="12" height="9" viewBox="0 0 12 9"><path d="M5 1 L1.5 4.5 L5 8 M10.5 1 L7 4.5 L10.5 8" stroke="#d8d8d8" stroke-width="1.2" fill="none"/></svg>
<div class="a" style="left:102px;top:147px;width:3px;height:1159px;background:#3b3b3b"></div>
<svg style="left:33px;top:169px" width="29" height="7" viewBox="0 0 29 7"><path d="M1 0 V7 M4.5 0 V7 M8 0 V7 M11.5 0 V7 M15 0 V7 M18.5 0 V7 M22 0 V7 M25.5 0 V7" stroke="#3c3c3c" stroke-width="1.2"/></svg>
<div class="a" style="left:5px;top:187px;width:42px;height:33px;background:#2f2f2f;border-radius:4px"></div>
<svg style="left:17px;top:192px" width="22" height="27" viewBox="0 0 22 27"><path d="M2 1.5 L20 15.5 L11 15.5 L2 25 Z" stroke="#d4d4d4" stroke-width="1.6" fill="none" stroke-linejoin="round"/></svg>
<svg style="left:62px;top:191px" width="22" height="28" viewBox="0 0 22 28"><path d="M1.5 1 L20 16.5 L10.5 16.5 L1.5 26.5 Z" fill="#c8c8c8"/></svg>
<!-- page tool / gap tool -->
<svg style="left:16px;top:227px" width="25" height="26" viewBox="0 0 25 26"><path d="M12 21.5 H1.5 V1.5 H11 L16 7 V13" stroke="#c8c8c8" stroke-width="1.6" fill="none"/><path d="M11 1.5 V7 H16" stroke="#c8c8c8" stroke-width="1.4" fill="none"/><path d="M14 13 L24 20 L18 20.5 L14 26 Z" fill="#c8c8c8"/></svg>
<svg style="left:57px;top:229px" width="29" height="23" viewBox="0 0 29 23"><path d="M2 0 V23 M27 0 V23" stroke="#c8c8c8" stroke-width="2.4"/><path d="M6 11.5 H23" stroke="#c8c8c8" stroke-width="2"/><path d="M5 11.5 L10 7 V16 Z M24 11.5 L19 7 V16 Z" fill="#c8c8c8"/></svg>
<!-- content collector/placer -->
<svg style="left:15px;top:263px" width="23" height="26" viewBox="0 0 23 26"><path d="M1.5 10 V24 H21.5 V10" stroke="#c8c8c8" stroke-width="2.2" fill="none"/><path d="M5 17 H7 M10 17 H12 M15 17 H17 M5 20 H7 M10 20 H12 M15 20 H17 M15 13 H17" stroke="#c8c8c8" stroke-width="2"/><path d="M4 1 L11 8 M11 3 V8 H6" stroke="#c8c8c8" stroke-width="1.8" fill="none"/></svg>
<svg style="left:60px;top:263px" width="23" height="26" viewBox="0 0 23 26"><path d="M1.5 10 V24 H21.5 V10" stroke="#c8c8c8" stroke-width="2.2" fill="none"/><path d="M5 14 H7 M10 14 H12 M15 14 H17 M5 17 H7 M10 17 H12 M15 17 H17 M5 20 H7 M10 20 H12 M15 20 H17" stroke="#c8c8c8" stroke-width="2"/><path d="M12 9 L19 2 M14 2 H19 V7" stroke="#c8c8c8" stroke-width="1.8" fill="none"/></svg>
<div class="a" style="left:0;top:296px;width:102px;height:1px;background:#4b4b4b"></div>
<!-- type / line -->
<svg style="left:15px;top:305px" width="32" height="27" viewBox="0 0 32 27"><path d="M1.5 6 V1.5 H21 V6 M11.25 1.5 V21 M6 21 H16.5" stroke="#c8c8c8" stroke-width="2.4" fill="none"/><path d="M25 25 L30 20 V25 Z" fill="#c8c8c8"/></svg>
<svg style="left:59px;top:305px" width="25" height="24" viewBox="0 0 25 24"><path d="M1.5 22 L23 1.5" stroke="#c8c8c8" stroke-width="1.8"/></svg>
<!-- pen / pencil -->
<svg style="left:13px;top:340px" width="34" height="27" viewBox="0 0 34 27"><path d="M1 24 L4 13 L12 7 L18 13 L12 21 Z" fill="#c8c8c8"/><path d="M13 6 L17 2 L23 8 L19 12 Z" fill="#c8c8c8"/><path d="M2 23 L9 16" stroke="#535353" stroke-width="1.2"/><circle cx="9.5" cy="15.5" r="1.4" fill="#535353"/><path d="M27 25 L32 20 V25 Z" fill="#c8c8c8"/></svg>
<svg style="left:58px;top:340px" width="34" height="27" viewBox="0 0 34 27"><path d="M1 24 L3 17 L17 3 L22 8 L8 22 Z" fill="#c8c8c8"/><path d="M18 2 L20.5 0 L25 4.5 L23 7 Z" fill="#c8c8c8"/><path d="M3 22 L4 18.5 L6.5 21 Z" fill="#535353"/><path d="M27 25 L32 20 V25 Z" fill="#c8c8c8"/></svg>
<!-- frame / rect -->
<svg style="left:13px;top:377px" width="34" height="27" viewBox="0 0 34 27"><rect x="1.5" y="1.5" width="22" height="20" stroke="#c8c8c8" stroke-width="1.6" fill="none"/><path d="M1.5 1.5 L23.5 21.5 M23.5 1.5 L1.5 21.5" stroke="#c8c8c8" stroke-width="1.2"/><path d="M27 25 L32 20 V25 Z" fill="#c8c8c8"/></svg>
<svg style="left:58px;top:377px" width="34" height="27" viewBox="0 0 34 27"><rect x="1.5" y="1.5" width="22" height="20" stroke="#c8c8c8" stroke-width="1.6" fill="#6a6a6a"/><path d="M27 25 L32 20 V25 Z" fill="#c8c8c8"/></svg>
<div class="a" style="left:0;top:408px;width:102px;height:1px;background:#4b4b4b"></div>
<!-- scissors / free transform -->
<svg style="left:12px;top:416px" width="30" height="27" viewBox="0 0 30 27"><circle cx="23" cy="6.5" r="4.5" stroke="#c8c8c8" stroke-width="1.8" fill="none"/><circle cx="23" cy="20.5" r="4.5" stroke="#c8c8c8" stroke-width="1.8" fill="none"/><path d="M1 5 L19 16 M1 22 L19 11" stroke="#c8c8c8" stroke-width="2.4"/></svg>
<svg style="left:56px;top:416px" width="36" height="28" viewBox="0 0 36 28"><path d="M1 1 L14 11 L1 18 Z" fill="#c8c8c8"/><path d="M10 3 H28 V20 H10 V13" stroke="#c8c8c8" stroke-width="1.4" fill="none"/><g fill="#c8c8c8"><circle cx="10" cy="3" r="1.6"/><circle cx="19" cy="3" r="1.6"/><circle cx="28" cy="3" r="1.6"/><circle cx="28" cy="11" r="1.6"/><circle cx="28" cy="20" r="1.6"/><circle cx="19" cy="20" r="1.6"/><circle cx="10" cy="20" r="1.6"/></g><path d="M30 26 L35 21 V26 Z" fill="#c8c8c8"/></svg>
<!-- gradient / feather -->
<svg style="left:13px;top:453px" width="26" height="24" viewBox="0 0 26 24"><defs><linearGradient id="g1" x1="0" x2="1"><stop offset="0" stop-color="#222"/><stop offset="1" stop-color="#ddd"/></linearGradient></defs><rect x="1.5" y="1.5" width="22" height="20" stroke="#c8c8c8" stroke-width="1.6" fill="url(#g1)"/></svg>
<svg style="left:58px;top:453px" width="26" height="24" viewBox="0 0 26 24"><rect x="1.5" y="1.5" width="22" height="20" stroke="#c8c8c8" stroke-width="1.6" fill="#6c6c6c"/><path d="M3 3 H7 V7 H3 Z M11 3 H15 V7 H11 Z M19 3 H22 V7 H19 Z M7 7 H11 V11 H7 Z M15 7 H19 V11 H15 Z M3 11 H7 V15 H3 Z M11 11 H15 V15 H11 Z M19 11 H22 V15 H19 Z M7 15 H11 V20 H7 Z M15 15 H19 V20 H15 Z" fill="#333"/></svg>
<div class="a" style="left:0;top:484px;width:102px;height:1px;background:#4b4b4b"></div>
<!-- note / eyedropper -->
<svg style="left:15px;top:494px" width="23" height="23" viewBox="0 0 23 23"><path d="M0 0 H22 V14 L14 22 H0 Z" fill="#c8c8c8"/><path d="M4 6 H18 M4 10 H18 M4 14 H10" stroke="#535353" stroke-width="1.6"/><path d="M15 22 V15 H22" fill="#535353"/><path d="M14.5 22 L22 14.5 V22 Z" fill="#535353"/><path d="M16 21.5 L21.5 16 V21.5 Z" fill="#c8c8c8"/></svg>
<svg style="left:57px;top:493px" width="35" height="30" viewBox="0 0 35 30"><path d="M23 2 C25 0 28 2 27 5 L24 8 L26 10 L23 12 L13 22 C10 25 4 28 3 27 C2 26 5 20 8 17 L18 7 L20 4 L22 6 Z" stroke="#c8c8c8" stroke-width="1.5" fill="none"/><path d="M20 4 C22 0 27 0 28 4 C28 6 26 7 24 8 Z" fill="#c8c8c8"/><rect x="12.5" y="17.5" width="15" height="6" stroke="#c8c8c8" stroke-width="1.4" fill="#535353"/><path d="M15 20.5 H17 M19 20.5 H21 M23 20.5 H25" stroke="#c8c8c8" stroke-width="2"/><path d="M29 28 L34 23 V28 Z" fill="#c8c8c8"/></svg>
<!-- hand / zoom -->
<svg style="left:13px;top:529px" width="25" height="25" viewBox="0 0 25 25"><path d="M6 14 V5 C6 3.5 8.5 3.5 8.5 5 V11 V2.5 C8.5 1 11 1 11 2.5 V11 V2 C11 0.5 13.5 0.5 13.5 2 V11 V4 C13.5 2.5 16 2.5 16 4 V14 L18.5 10.5 C19.5 9 22 10 21 12 L16.5 20 C15 23 12 24 9.5 24 C6 24 4 21 4 18 L2 13 C1.5 11.5 3.5 10.5 4.5 12 Z" fill="#c8c8c8"/></svg>
<svg style="left:58px;top:529px" width="26" height="26" viewBox="0 0 26 26"><circle cx="10" cy="10" r="8.5" stroke="#c8c8c8" stroke-width="1.8" fill="none"/><path d="M16 16 L24.5 24.5" stroke="#c8c8c8" stroke-width="2.6"/></svg>
<div class="a" style="left:0;top:561px;width:102px;height:1px;background:#4b4b4b"></div>
<!-- fill/stroke -->
<div class="a" style="left:38px;top:597px;width:50px;height:50px;background:#000"></div>
<div class="a" style="left:52px;top:611px;width:22px;height:22px;background:#535353"></div>
<div class="a" style="left:9px;top:568px;width:53px;height:53px;background:#fff;border:1px solid #9a9a9a;overflow:hidden"><svg style="left:0;top:0" width="53" height="53"><path d="M1 51 L50 2" stroke="#ff0000" stroke-width="3" stroke-linecap="round"/></svg></div>
<svg style="left:76px;top:569px" width="19" height="18" viewBox="0 0 19 18"><path d="M5 5 H11 C14 5 15 7 15 10 V12" stroke="#c8c8c8" stroke-width="2.4" fill="none"/><path d="M1 5 L7 0.5 V9.5 Z" fill="#c8c8c8"/><path d="M10.5 11 H19.5 L15 17 Z" fill="#c8c8c8"/></svg>
<svg style="left:9px;top:627px" width="20" height="20" viewBox="0 0 20 20"><rect x="6.5" y="6.5" width="11" height="11" fill="#000" stroke="#c8c8c8" stroke-width="1.5"/><rect x="2" y="2" width="10" height="10" fill="#fff" stroke="#c8c8c8" stroke-width="1.5"/><path d="M3 11 L11 3" stroke="#ff0000" stroke-width="1.3"/><rect x="10" y="10" width="4" height="4" fill="#535353"/></svg>
<div class="a" style="left:17px;top:662px;width:27px;height:24px;background:#323232;border-radius:4px"></div>
<svg style="left:22px;top:665px" width="17" height="17" viewBox="0 0 17 17"><rect x="2" y="2" width="13" height="13" stroke="#c8c8c8" stroke-width="1.6" fill="#6a6a6a"/></svg>
<div class="a" style="left:57px;top:663px;font-family:'Liberation Serif',serif;font-weight:bold;font-size:19px;color:#c8c8c8;line-height:20px">T</div>
<svg style="left:8px;top:699px" width="22" height="23" viewBox="0 0 22 23"><rect x="1" y="1" width="18" height="18" fill="#000" stroke="#bbb" stroke-width="1"/><path d="M16 22 L21 17 V22 Z" fill="#c8c8c8"/></svg>
<svg style="left:38px;top:699px" width="20" height="20" viewBox="0 0 20 20"><defs><linearGradient id="g2" x1="0" x2="1"><stop offset="0" stop-color="#fff"/><stop offset="1" stop-color="#000"/></linearGradient></defs><rect x="1" y="1" width="18" height="18" fill="url(#g2)" stroke="#bbb" stroke-width="1"/></svg>
<div class="a" style="left:65px;top:696px;width:27px;height:27px;background:#323232;border-radius:4px"></div>
<div class="a" style="left:69px;top:700px;width:19px;height:19px;background:#fff;border:1px solid #bbb;overflow:hidden"><svg style="left:0;top:0" width="19" height="19"><path d="M1 17 L17 1" stroke="#ff0000" stroke-width="2.2"/></svg></div>
<svg style="left:16px;top:741px" width="22" height="18" viewBox="0 0 22 18"><rect x="7" y="6" width="13" height="11" fill="#c8c8c8"/><path d="M1 6 H5 M1 11 H5 M1 16 H5 M3 2 V4 M10 1 V3 M14 1 V3 M18 1 V3" stroke="#c8c8c8" stroke-width="1.6"/></svg>
<div class="a" style="left:0;top:770px;width:102px;height:1px;background:#4b4b4b"></div>
<svg style="left:17px;top:781px" width="20" height="20" viewBox="0 0 20 20"><rect x="1" y="1" width="18" height="18" stroke="#c8c8c8" stroke-width="1.5" fill="none"/><rect x="5" y="6" width="8" height="6" stroke="#c8c8c8" stroke-width="1.3" fill="#535353"/><rect x="8" y="9" width="8" height="6" stroke="#c8c8c8" stroke-width="1.3" fill="#535353"/></svg>
<div class="a" style="left:50px;top:774px;width:42px;height:34px;background:#323232;border-radius:4px"></div>
<svg style="left:61px;top:781px" width="20" height="20" viewBox="0 0 20 20"><rect x="1" y="1" width="18" height="18" stroke="#c8c8c8" stroke-width="1.5" fill="#6a6a6a"/><path d="M1 4.5 H19" stroke="#c8c8c8" stroke-width="1.5"/></svg>
<svg style="left:84px;top:801px" width="6" height="6" viewBox="0 0 6 6"><path d="M0 6 L6 0 V6 Z" fill="#c8c8c8"/></svg>
<!-- PAGE TEXT -->
<div class="pg j" style="left:679px;top:269.00px;width:233px">Duis autem veleum iriure dolor in hendrerit</div>
<div class="pg j" style="left:679px;top:285.25px;width:233px">Li Europan lingues es membres del sam</div>
<div class="pg j" style="left:679px;top:301.50px;width:233px">familie. Lor separat existentie es un myth.</div>
<div class="pg j" style="left:679px;top:317.75px;width:233px">Por scientie, musica, sport etc, litot Europa</div>
<div class="pg" style="left:679px;top:334.00px;width:233px">usa li sam vocabular.</div>
<div class="pg j" style="left:679px;top:356.00px;width:233px">Li lingues differe solmen in li grammatica,</div>
<div class="pg j" style="left:679px;top:372.25px;width:233px">li pronunciation e li plu commun vocabules.</div>
<div class="pg j" style="left:679px;top:388.50px;width:233px">Omnicos directe al desirabilite de un nov</div>
<div class="pg j" style="left:679px;top:404.75px;width:233px">lingua franca: On refusa continuar payar</div>
<div class="pg" style="left:679px;top:421.00px;width:233px">custosi traductores.</div>
<div class="pg j" style="left:679px;top:443.00px;width:233px">It solmen va esser necessi far uniform</div>
<div class="pg j" style="left:679px;top:459.25px;width:233px">grammatica, pronunciation e plu sommun</div>
<div class="pg j" style="left:679px;top:475.50px;width:233px">paroles. Ma quande lingues coalesce, li</div>
<div class="pg j" style="left:679px;top:491.75px;width:233px;letter-spacing:-0.032px">grammatica del resultant lingue es plu simplic</div>
<div class="pg j" style="left:679px;top:508.00px;width:233px">e regulari quam ti del coalescent lingues. Li</div>
<div class="pg" style="left:679px;top:524.25px;width:233px">nov lingua franca va esser plu simplice.</div>
<div class="pg j" style="left:679px;top:547.00px;width:233px">Regulari quam li existent Europan lingues.</div>
<div class="pg j" style="left:679px;top:563.25px;width:233px">It va esser tam simplic quam Occidental in</div>
<div class="pg j" style="left:679px;top:579.50px;width:233px">fact, it va esser Occidental. A un Angleso it</div>
<div class="pg j" style="left:679px;top:595.75px;width:233px">va semblar un simplificat Angles, quam un</div>
<div class="pg" style="left:679px;top:612.00px;width:233px">skeptic amico dit me que Occidental.</div>
<div class="pg j" style="left:679px;top:634.00px;width:233px">Lorem ipsum dolor sit amet, consect</div>
<div class="pg j" style="left:679px;top:650.25px;width:233px">adipiscing elit, sed diam nonummy nibh</div>
<div class="pg j" style="left:679px;top:666.50px;width:233px">euismod tincidunt ut laoreet dolore magna</div>
<div class="pg j" style="left:679px;top:682.75px;width:233px">aliquam erat volutpat. Ut wisi enim ad minim</div>
<div class="pg j" style="left:679px;top:699.00px;width:233px">veniam, quis nostrud exercitation ulliam</div>
<div class="pg j" style="left:679px;top:715.25px;width:233px">corper suscipit lobortis nisl ut aliquip exea</div>
<div class="pg" style="left:679px;top:731.50px;width:233px">commodo consequat.</div>
<div class="pg j" style="left:679px;top:753.00px;width:233px">Duis autem veleum iriure dolor in hendrerit</div>
<div class="pg j" style="left:679px;top:769.25px;width:233px">in vulputate velit esse molestie consequat.</div>
<div class="pg j" style="left:679px;top:785.50px;width:233px">Vel willum lunombro dolore eu feugiat nulla</div>
<div class="pg" style="left:679px;top:801.75px;width:233px">facilisis.</div>
<div class="pg j" style="left:679px;top:824.00px;width:233px">At vero eros et accumsan et iusto odio</div>
<div class="pg j" style="left:679px;top:840.25px;width:233px">dignissim qui blandit praesent luptatum ezril</div>
<div class="pg j" style="left:679px;top:856.50px;width:233px">delenit augue duis dolore te feugait nulla</div>
<div class="pg" style="left:928px;top:655.00px;width:233px">facilisi.</div>
<div class="pg j" style="left:928px;top:678.00px;width:233px">Li Europan lingues es membres del sam</div>
<div class="pg j" style="left:928px;top:694.25px;width:233px">familie. Lor separat existentie es un myth.</div>
<div class="pg j" style="left:928px;top:710.50px;width:233px">Por scientie, musica, sport etc, litot Europa</div>
<div class="pg" style="left:928px;top:726.75px;width:233px">usa li sam vocabular.</div>
<div class="pg j" style="left:928px;top:749.00px;width:233px">Li lingues differe solmen in li grammatica,</div>
<div class="pg j" style="left:928px;top:765.25px;width:233px">li pronunciation e li plu commun vocabules.</div>
<div class="pg j" style="left:928px;top:781.50px;width:233px">Omnicos directe al desirabilite de un nov</div>
<div class="pg j" style="left:928px;top:797.75px;width:233px">lingua franca: On refusa continuar payar</div>
<div class="pg" style="left:928px;top:814.00px;width:233px">custosi traductores.</div>
<div class="pg j" style="left:928px;top:836.00px;width:233px">Regulari quam li existent Europan lingues.</div>
<div class="pg j" style="left:928px;top:852.25px;width:233px">It va esser tam simplic quam Occidental in</div>
<div class="pg j" style="left:1176px;top:655.00px;width:233px">fact, it va esser Occidental. A un Angleso it</div>
<div class="pg j" style="left:1176px;top:671.25px;width:233px">va semblar un simplificat Angles, quam un</div>
<div class="pg" style="left:1176px;top:687.50px;width:233px">skeptic amico dit me que Occidental.</div>
<div class="pg j" style="left:1176px;top:710.00px;width:233px">Lorem ipsum dolor sit amet, consect</div>
<div class="pg j" style="left:1176px;top:726.25px;width:233px">adipiscing elit, sed diam nonummy nibh</div>
<div class="pg j" style="left:1176px;top:742.50px;width:233px">euismod tincidunt ut laoreet dolore magna</div>
<div class="pg" style="left:1176px;top:758.75px;width:233px">aliquam erat volutpat.</div>
<div class="pg j" style="left:1176px;top:781.00px;width:233px">Ut wisi enim ad minim veniam, quis nostrud</div>
<div class="pg j" style="left:1176px;top:797.25px;width:233px">exercitation ulliam corper suscipit lobortis</div>
<div class="pg" style="left:1176px;top:813.50px;width:233px">nisl ut aliquip exea commodo consequat.</div>
<div class="pg j" style="left:1176px;top:836.00px;width:233px">Duis autem veleum iriure dolor in hendrerit</div>
<div class="pg j" style="left:1176px;top:852.25px;width:233px">in vulputate velit esse molestie consequat.</div>
<div class="pg j" style="left:1176px;top:868.50px;width:233px">Vel willum lunombro dolore eu feugiat nulla</div>
<div class="pg" style="left:1176px;top:884.75px;width:233px">facilisis.</div>
<div class="pg j" style="left:1176px;top:907.00px;width:233px">At vero eros et accumsan et iusto odio</div>
<div class="pg j" style="left:1176px;top:923.25px;width:233px">dignissim qui blandit praesent luptatum ezril</div>
<div class="pg j" style="left:1176px;top:939.50px;width:233px">delenit augue duis dolore te feugait nulla</div>
<div class="pg" style="left:1176px;top:955.75px;width:233px">facilisi.</div>
<div class="pg j" style="left:1176px;top:977.00px;width:233px">It solmen va esser necessi far uniform</div>
<div class="pg j" style="left:1176px;top:993.25px;width:233px">grammatica, pronunciation e plu sommun</div>
<div class="pg j" style="left:1176px;top:1009.50px;width:233px">paroles. Ma quande lingues coalesce, li</div>
<div class="pg j" style="left:1176px;top:1025.75px;width:233px;letter-spacing:-0.032px">grammatica del resultant lingue es plu simplic</div>
<div class="pg j" style="left:1176px;top:1042.00px;width:233px">e regulari quam ti del coalescent lingues. Li</div>
<div class="pg" style="left:1176px;top:1058.25px;width:233px">nov lingua franca va esser plu simplice.</div>
<div class="pg j" style="left:1176px;top:1081.00px;width:233px">Li lingues differe solmen in li grammatica,</div>
<div class="pg j" style="left:1176px;top:1097.25px;width:233px">li pronunciation e li plu commun vocabules.</div>
<div class="pg j" style="left:1176px;top:1113.50px;width:233px">Omnicos directe al desirabilite de un nov</div>
<div class="pg j" style="left:1176px;top:1129.75px;width:233px">lingua franca: On refusa continuar payar</div>
<div class="pg" style="left:1176px;top:1146.00px;width:233px">custosi traductores.</div>
<div class="a" style="left:1068px;top:601px;width:200px;text-align:center;font-family:'Liberation Serif',serif;font-weight:bold;font-size:16px;line-height:18px;color:#111;white-space:nowrap">Caption placeholder</div>
<div class="a" style="left:944px;top:1139px;width:200px;text-align:center;font-family:'Liberation Serif',serif;font-weight:bold;font-size:16px;line-height:18px;color:#111;white-space:nowrap">Caption placeholder</div>
<div class="a" style="left:944px;top:1216px;width:200px;text-align:center;font-family:'Liberation Serif',serif;font-size:26px;line-height:28px;color:#111;white-space:nowrap">—6—</div>
<!-- PAGES PANEL -->
<div class="a" style="left:1622px;top:159px;width:362px;height:858px;background:#535353;border-left:1px solid #2e2e2e;box-shadow:-3px 0 3px -1px rgba(0,0,0,0.2)"></div>
<div class="a" style="left:1622px;top:159px;width:362px;height:6px;background:#2e2e2e"></div>
<div class="a" style="left:1623px;top:165px;width:361px;height:41px;background:#434343"></div>
<div class="a" style="left:1623px;top:165px;width:92px;height:41px;background:#535353"></div>
<div class="a" style="left:1801px;top:165px;width:1px;height:41px;background:#3c3c3c"></div>
<div class="a" style="left:1879px;top:165px;width:1px;height:41px;background:#3c3c3c"></div>
<svg style="left:1635px;top:179px" width="9" height="15" viewBox="0 0 9 15"><path d="M1 5.5 L4.5 1.5 L8 5.5 M1 9.5 L4.5 13.5 L8 9.5" stroke="#bdbdbd" stroke-width="1.3" fill="none"/></svg>
<div class="dk" style="left:1651px;top:177px;line-height:18px">Pages</div>
<div class="dk" style="left:1734px;top:177px;line-height:18px;color:#b4b4b4">Layers</div>
<div class="dk" style="left:1820px;top:177px;line-height:18px;color:#b4b4b4">Links</div>
<svg style="left:1922px;top:180px" width="15" height="11" viewBox="0 0 15 11"><path d="M1 1 L6 5.5 L1 10 M8 1 L13 5.5 L8 10" stroke="#e0e0e0" stroke-width="1.5" fill="none"/></svg>
<div class="a" style="left:1947px;top:177px;width:2px;height:17px;background:#bdbdbd"></div>
<svg style="left:1959px;top:180px" width="15" height="12" viewBox="0 0 15 12"><path d="M0 1 H15 M0 4 H15 M0 7 H15 M0 10 H15" stroke="#d0d0d0" stroke-width="1.3"/></svg>
<div class="a" style="left:1628px;top:221px;font-size:14.5px;color:#ececec;line-height:18px">A-Master</div>
<div class="a" style="left:1628px;top:264px;font-size:14.5px;color:#ececec;line-height:18px">B-Master</div>
<div class="a" style="left:1921px;top:207px;width:30px;height:1px;background:#8a8a8a"></div>
<div class="a" style="left:1921px;top:214px;width:30px;height:37px;background:#fff"></div>
<div class="a" style="left:1929px;top:223px;width:13px;height:2px;background:#000"></div>
<div class="a" style="left:1923px;top:226px;width:26px;height:23px;border:1px dotted #3a8ef0;border-bottom:1px dotted #3a8ef0"></div>
<div class="a" style="left:1921px;top:258px;width:30px;height:36px;background:#fff"></div>
<div class="a" style="left:1923px;top:261px;width:26px;height:31px;border:1px dotted #3a8ef0"></div>
<div class="a" style="left:1929px;top:268px;width:15px;height:16px;border-left:1px dotted #3a8ef0;border-right:1px dotted #3a8ef0"></div>
<div class="a" style="left:1963px;top:206px;width:20px;height:93px;background:#4a4a4a"></div>
<div class="a" style="left:1966px;top:231px;width:15px;height:37px;background:#6a6a6a;border-radius:8px"></div>
<svg style="left:1967px;top:213px" width="12" height="7" viewBox="0 0 12 7"><path d="M1 6 L6 1 L11 6" stroke="#8a8a8a" stroke-width="1" fill="none"/></svg>
<svg style="left:1967px;top:284px" width="12" height="7" viewBox="0 0 12 7"><path d="M1 1 L6 6 L11 1" stroke="#8a8a8a" stroke-width="1" fill="none"/></svg>
<div class="a" style="left:1623px;top:299px;width:361px;height:3px;background:#5e5e5e"></div>
<svg style="left:1661px;top:308px" width="14" height="7" viewBox="0 0 14 7"><path d="M0 0 H14 L7 7 Z" fill="#c8c8c8"/></svg>
<!-- THUMBS -->
<div class="a" style="left:1647px;top:316px;width:43px;height:54px;background:#fff;border:1px solid #c8c8c8"></div>
<div class="a" style="left:1661px;top:318px;font-size:15px;color:#000;line-height:15px">A</div>
<div class="a" style="left:1649px;top:332px;width:12px;height:33px;background:repeating-linear-gradient(to bottom,transparent 0 1px,#0a0a0a 1px 2.3px,transparent 2.3px 9.6px),repeating-linear-gradient(to bottom,#6c6c6c 0 2.3px,#eeeeee 2.3px 3.2px)"></div>
<div class="a" style="left:1662px;top:332px;width:13px;height:33px;background:repeating-linear-gradient(to bottom,transparent 0 4.2px,#0a0a0a 4.2px 5.5px,transparent 5.5px 9.6px),repeating-linear-gradient(to bottom,#6c6c6c 0 2.3px,#eeeeee 2.3px 3.2px)"></div>
<div class="a" style="left:1676px;top:332px;width:12px;height:33px;background:repeating-linear-gradient(to bottom,transparent 0 7.4px,#0a0a0a 7.4px 8.7px,transparent 8.7px 9.6px),repeating-linear-gradient(to bottom,#6c6c6c 0 2.3px,#eeeeee 2.3px 3.2px)"></div>
<div class="a" style="left:1665px;top:366px;width:6px;height:1px;background:#000"></div>
<div class="a" style="left:1656px;top:380px;width:20px;text-align:center;font-size:14.5px;color:#ececec;line-height:18px">1</div>
<div class="a" style="left:1647px;top:412px;width:43px;height:54px;background:#fff;border:1px solid #c8c8c8"></div>
<div class="a" style="left:1648px;top:413px;width:28px;height:29px;border:1px dotted #3a8ef0"></div>
<div class="a" style="left:1662px;top:415px;font-size:15px;color:#000;line-height:15px">B</div>
<div class="a" style="left:1677px;top:413px;width:12px;height:43px;background:repeating-linear-gradient(to bottom,transparent 0 4.2px,#0a0a0a 4.2px 5.5px,transparent 5.5px 9.6px),repeating-linear-gradient(to bottom,#6c6c6c 0 2.3px,#eeeeee 2.3px 3.2px)"></div>
<div class="a" style="left:1649px;top:445px;width:13px;height:16px;background:repeating-linear-gradient(to bottom,transparent 0 1px,#0a0a0a 1px 2.3px,transparent 2.3px 9.6px),repeating-linear-gradient(to bottom,#6c6c6c 0 2.3px,#eeeeee 2.3px 3.2px)"></div>
<div class="a" style="left:1663px;top:445px;width:13px;height:16px;background:repeating-linear-gradient(to bottom,transparent 0 7.4px,#0a0a0a 7.4px 8.7px,transparent 8.7px 9.6px),repeating-linear-gradient(to bottom,#6c6c6c 0 2.3px,#eeeeee 2.3px 3.2px)"></div>
<div class="a" style="left:1657px;top:441px;width:6px;height:1px;background:#000"></div>
<div class="a" style="left:1665px;top:462px;width:6px;height:1px;background:#000"></div>
<div class="a" style="left:1656px;top:476px;width:20px;text-align:center;font-size:14.5px;color:#ececec;line-height:18px">2</div>
<div class="a" style="left:1647px;top:508px;width:43px;height:54px;background:#fff;border:1px solid #c8c8c8"></div>
<div class="a" style="left:1648px;top:509px;width:28px;height:29px;border:1px dotted #3a8ef0"></div>
<div class="a" style="left:1662px;top:511px;font-size:15px;color:#000;line-height:15px">B</div>
<div class="a" style="left:1677px;top:509px;width:12px;height:43px;background:repeating-linear-gradient(to bottom,transparent 0 4.2px,#0a0a0a 4.2px 5.5px,transparent 5.5px 9.6px),repeating-linear-gradient(to bottom,#6c6c6c 0 2.3px,#eeeeee 2.3px 3.2px)"></div>
<div class="a" style="left:1649px;top:541px;width:13px;height:16px;background:repeating-linear-gradient(to bottom,transparent 0 1px,#0a0a0a 1px 2.3px,transparent 2.3px 9.6px),repeating-linear-gradient(to bottom,#6c6c6c 0 2.3px,#eeeeee 2.3px 3.2px)"></div>
<div class="a" style="left:1663px;top:541px;width:13px;height:16px;background:repeating-linear-gradient(to bottom,transparent 0 7.4px,#0a0a0a 7.4px 8.7px,transparent 8.7px 9.6px),repeating-linear-gradient(to bottom,#6c6c6c 0 2.3px,#eeeeee 2.3px 3.2px)"></div>
<div class="a" style="left:1657px;top:537px;width:6px;height:1px;background:#000"></div>
<div class="a" style="left:1665px;top:558px;width:6px;height:1px;background:#000"></div>
<div class="a" style="left:1656px;top:572px;width:20px;text-align:center;font-size:14.5px;color:#ececec;line-height:18px">3</div>
<div class="a" style="left:1647px;top:604px;width:43px;height:54px;background:#fff;border:1px solid #c8c8c8"></div>
<div class="a" style="left:1648px;top:605px;width:41px;height:52px;border:1px dotted #3a8ef0"></div>
<div class="a" style="left:1648px;top:605px;width:12px;height:33px;background:repeating-linear-gradient(to bottom,transparent 0 1px,#0a0a0a 1px 2.3px,transparent 2.3px 9.6px),repeating-linear-gradient(to bottom,#6c6c6c 0 2.3px,#eeeeee 2.3px 3.2px)"></div>
<div class="a" style="left:1661px;top:606px;font-size:15px;color:#000;line-height:15px;">C</div>
<div class="a" style="left:1661px;top:625px;width:14px;height:13px;background:repeating-linear-gradient(to bottom,transparent 0 1px,#0a0a0a 1px 2.3px,transparent 2.3px 9.6px),repeating-linear-gradient(to bottom,#6c6c6c 0 2.3px,#eeeeee 2.3px 3.2px)"></div>
<div class="a" style="left:1676px;top:625px;width:13px;height:29px;background:repeating-linear-gradient(to bottom,transparent 0 4.2px,#0a0a0a 4.2px 5.5px,transparent 5.5px 9.6px),repeating-linear-gradient(to bottom,#6c6c6c 0 2.3px,#eeeeee 2.3px 3.2px)"></div>
<div class="a" style="left:1663px;top:646px;width:7px;height:1px;background:#000"></div>
<div class="a" style="left:1665px;top:652px;width:6px;height:1px;background:#000"></div>
<div class="a" style="left:1656px;top:668px;width:20px;text-align:center;font-size:14.5px;color:#ececec;line-height:18px">4</div>
<div class="a" style="left:1647px;top:700px;width:43px;height:54px;background:#fff;border:1px solid #c8c8c8"></div>
<div class="a" style="left:1648px;top:701px;width:41px;height:52px;border:1px dotted #3a8ef0"></div>
<div class="a" style="left:1648px;top:701px;width:12px;height:33px;background:repeating-linear-gradient(to bottom,transparent 0 1px,#0a0a0a 1px 2.3px,transparent 2.3px 9.6px),repeating-linear-gradient(to bottom,#6c6c6c 0 2.3px,#eeeeee 2.3px 3.2px)"></div>
<div class="a" style="left:1661px;top:702px;font-size:15px;color:#000;line-height:15px;">C</div>
<div class="a" style="left:1661px;top:721px;width:14px;height:13px;background:repeating-linear-gradient(to bottom,transparent 0 1px,#0a0a0a 1px 2.3px,transparent 2.3px 9.6px),repeating-linear-gradient(to bottom,#6c6c6c 0 2.3px,#eeeeee 2.3px 3.2px)"></div>
<div class="a" style="left:1676px;top:721px;width:13px;height:29px;background:repeating-linear-gradient(to bottom,transparent 0 4.2px,#0a0a0a 4.2px 5.5px,transparent 5.5px 9.6px),repeating-linear-gradient(to bottom,#6c6c6c 0 2.3px,#eeeeee 2.3px 3.2px)"></div>
<div class="a" style="left:1663px;top:742px;width:7px;height:1px;background:#000"></div>
<div class="a" style="left:1665px;top:748px;width:6px;height:1px;background:#000"></div>
<div class="a" style="left:1656px;top:764px;width:20px;text-align:center;font-size:14.5px;color:#ececec;line-height:18px">5</div>
<div class="a" style="left:1647px;top:796px;width:43px;height:54px;background:#9cc4f0;border:1px solid #c8c8c8"></div>
<div class="a" style="left:1648px;top:797px;width:41px;height:52px;border:1px dotted #3a8ef0"></div>
<div class="a" style="left:1648px;top:797px;width:12px;height:33px;background:repeating-linear-gradient(to bottom,transparent 0 1px,#1e4a8a 1px 2.3px,transparent 2.3px 9.6px),repeating-linear-gradient(to bottom,#5a86c2 0 2.3px,#b8d6f6 2.3px 3.2px)"></div>
<div class="a" style="left:1660px;top:797px;width:13px;height:14px;background:#fff"></div>
<div class="a" style="left:1661px;top:798px;font-size:15px;color:#000;line-height:15px;font-weight:bold">C</div>
<div class="a" style="left:1661px;top:817px;width:14px;height:13px;background:repeating-linear-gradient(to bottom,transparent 0 1px,#1e4a8a 1px 2.3px,transparent 2.3px 9.6px),repeating-linear-gradient(to bottom,#5a86c2 0 2.3px,#b8d6f6 2.3px 3.2px)"></div>
<div class="a" style="left:1676px;top:817px;width:13px;height:29px;background:repeating-linear-gradient(to bottom,transparent 0 4.2px,#1e4a8a 4.2px 5.5px,transparent 5.5px 9.6px),repeating-linear-gradient(to bottom,#5a86c2 0 2.3px,#b8d6f6 2.3px 3.2px)"></div>
<div class="a" style="left:1663px;top:838px;width:7px;height:1px;background:#000"></div>
<div class="a" style="left:1665px;top:844px;width:6px;height:1px;background:#000"></div>
<div class="a" style="left:1656px;top:858px;width:19px;height:21px;background:#2d8ceb"></div>
<div class="a" style="left:1656px;top:859px;width:19px;text-align:center;font-size:15px;font-weight:bold;color:#fff;line-height:19px">6</div>
<div class="a" style="left:1623px;top:966px;width:361px;height:1px;background:#4c4c4c"></div>
<div class="a" style="left:1631px;top:979px;font-size:14.5px;color:#ececec;line-height:18px">6 Pages in 6 Spreads</div>
<svg style="left:1841px;top:976px" width="30" height="19" viewBox="0 0 30 19"><path d="M10 4 V2 H17 L21 6 V16 H15" stroke="#c0c0c0" stroke-width="1.5" fill="none"/><path d="M1 9 H12 L15 12 V18 H1 Z" stroke="#c0c0c0" stroke-width="1.5" fill="none"/><path d="M24 15 L28 15 L26 17.5 Z" fill="#c0c0c0"/></svg>
<svg style="left:1889px;top:976px" width="19" height="19" viewBox="0 0 19 19"><rect x="1" y="1" width="17" height="17" stroke="#c0c0c0" stroke-width="1.5" fill="none"/><path d="M9.5 5 V14 M5 9.5 H14" stroke="#c0c0c0" stroke-width="1.5"/></svg>
<svg style="left:1929px;top:975px" width="19" height="20" viewBox="0 0 19 20"><path d="M1 4 H18 M6 4 V1.5 H13 V4" stroke="#c0c0c0" stroke-width="1.5" fill="none"/><path d="M3 4 V19 H16 V4" stroke="#c0c0c0" stroke-width="1.5" fill="none"/><path d="M7 7 V16 M9.5 7 V16 M12 7 V16" stroke="#c0c0c0" stroke-width="1.2"/></svg>
<div class="a" style="left:1622px;top:1004px;width:363px;height:2px;background:#161616"></div>
<div class="a" style="left:1622px;top:1006px;width:363px;height:11px;background:#515151;border-left:1px solid #2e2e2e"></div>
<svg style="left:1789px;top:1007px" width="29" height="6" viewBox="0 0 29 6"><path d="M1 0 V6 M4.5 0 V6 M8 0 V6 M11.5 0 V6 M15 0 V6 M18.5 0 V6 M22 0 V6 M25.5 0 V6" stroke="#333" stroke-width="1.1"/></svg>
<!-- RIGHT DOCK -->
<div class="a" style="left:1986px;top:147px;width:244px;height:1159px;background:#535353"></div>
<div class="a" style="left:1986px;top:147px;width:244px;height:16px;background:#434343"></div>
<div class="a" style="left:1986px;top:163px;width:244px;height:1px;background:#333"></div>
<svg style="left:2214px;top:151px" width="11" height="9" viewBox="0 0 11 9"><path d="M4.5 1 L1.5 4.5 L4.5 8 M9.5 1 L6.5 4.5 L9.5 8" stroke="#d8d8d8" stroke-width="1.2" fill="none"/></svg>
<svg style="left:2095px;top:169px" width="29" height="7" viewBox="0 0 29 7"><path d="M1 0 V7 M4 0 V7 M7 0 V7 M10 0 V7 M13 0 V7 M16 0 V7 M19 0 V7 M22 0 V7 M25 0 V7 M28 0 V7" stroke="#333" stroke-width="1.1"/></svg>
<div class="a" style="left:1993px;top:182px;width:231px;height:34px;background:#363636;border-radius:4px;border:1px solid #474747"></div>
<svg style="left:2003px;top:186px" width="28" height="30" viewBox="0 0 28 30"><path d="M1 8 L6 3 H13 V25 H1 Z M15 3 H22 L27 8 V25 H15 Z" fill="#c8c8c8"/><path d="M1 8 H6 V3 Z M27 8 H22 V3 Z" fill="#363636"/><path d="M14 0 V30" stroke="#c8c8c8" stroke-width="1.4"/></svg>
<div class="dk" style="left:2043px;top:191px;line-height:18px">Pages</div>
<svg style="left:2004px;top:230px" width="26" height="26" viewBox="0 0 26 26"><path d="M13 0 L26 7.5 L13 15 L0 7.5 Z" fill="#c8c8c8"/><path d="M3 14 L13 19.5 L23 14 L26 15.5 L13 23 L0 15.5 Z" fill="#c8c8c8"/></svg>
<div class="dk" style="left:2043px;top:233px;line-height:18px">Layers</div>
<svg style="left:2002px;top:277px" width="30" height="15" viewBox="0 0 30 15"><rect x="1.7" y="2.2" width="17.5" height="10.3" rx="5.15" stroke="#c8c8c8" stroke-width="2.6" fill="none"/><path d="M15 0 L13.5 5" stroke="#535353" stroke-width="2.2"/><rect x="10.8" y="2.2" width="17.5" height="10.3" rx="5.15" stroke="#c8c8c8" stroke-width="2.6" fill="none"/><path d="M15 14.8 L16.5 9.8" stroke="#535353" stroke-width="2.2"/></svg>
<div class="dk" style="left:2043px;top:275px;line-height:18px">Links</div>
<div class="a" style="left:1986px;top:309px;width:244px;height:1px;background:#3e3e3e"></div>
<svg style="left:2095px;top:315px" width="29" height="7" viewBox="0 0 29 7"><path d="M1 0 V7 M4 0 V7 M7 0 V7 M10 0 V7 M13 0 V7 M16 0 V7 M19 0 V7 M22 0 V7 M25 0 V7 M28 0 V7" stroke="#333" stroke-width="1.1"/></svg>
<svg style="left:2004px;top:336px" width="27" height="19" viewBox="0 0 27 19"><path d="M0 1 H26" stroke="#c8c8c8" stroke-width="1.4"/><path d="M0 8 H26" stroke="#c8c8c8" stroke-width="2.6"/><path d="M0 15.5 H26" stroke="#c8c8c8" stroke-width="4"/></svg>
<div class="dk" style="left:2043px;top:337px;line-height:18px">Stroke</div>
<svg style="left:2004px;top:379px" width="25" height="18" viewBox="0 0 25 18"><rect x="0.7" y="0.7" width="23.6" height="16.6" stroke="#c8c8c8" stroke-width="1.4" fill="none"/><rect x="2" y="2" width="6.5" height="6" fill="#8a8a8a"/><rect x="9.3" y="2" width="6.5" height="6" fill="#c0c0c0"/><rect x="16.6" y="2" width="6.5" height="6" fill="#8a8a8a"/><rect x="2" y="9.5" width="6.5" height="6.5" fill="#7a7a7a"/><rect x="9.3" y="9.5" width="6.5" height="6.5" fill="#9a9a9a"/><rect x="16.6" y="9.5" width="6.5" height="6.5" fill="#8a8a8a"/></svg>
<div class="dk" style="left:2043px;top:379px;line-height:18px">Swatches</div>
<svg style="left:2004px;top:413px" width="30" height="30" viewBox="0 0 30 30"><path d="M14 5 H6 C3.5 5 2.5 6 2.5 8.5 V25 C2.5 27.5 3.5 28.5 6 28.5 H22 C24.5 28.5 25.5 27.5 25.5 25 V17" stroke="#c8c8c8" stroke-width="2.2" fill="none"/><path d="M23.5 0 L25.6 5.4 L31 7.5 L25.6 9.6 L23.5 15 L21.4 9.6 L16 7.5 L21.4 5.4 Z" fill="#c8c8c8"/><path d="M10.5 15.5 L11.8 18.7 L15 20 L11.8 21.3 L10.5 24.5 L9.2 21.3 L6 20 L9.2 18.7 Z" fill="#c8c8c8"/></svg>
<div class="dk" style="left:2043px;top:421px;line-height:18pxword-spacing:3.5px">Text to Image (Beta)</div>
<svg style="left:2004px;top:462px" width="27" height="19" viewBox="0 0 27 19"><defs><linearGradient id="g3" x1="0" x2="1"><stop offset="0" stop-color="#222"/><stop offset="1" stop-color="#ddd"/></linearGradient></defs><rect x="0.7" y="0.7" width="25" height="17" stroke="#c8c8c8" stroke-width="1.4" fill="url(#g3)"/></svg>
<div class="dk" style="left:2043px;top:463px;line-height:18px">Gradient</div>
<svg style="left:2005px;top:501px" width="25" height="25" viewBox="0 0 25 25"><path d="M4 20 H2 V1 H19 V3" stroke="#c8c8c8" stroke-width="1.4" fill="none"/><rect x="5" y="4" width="19" height="20" rx="2" stroke="#c8c8c8" stroke-width="1.6" fill="none"/><path d="M14 4 V12 L16.5 10 L19 12 V4 Z" fill="#c8c8c8"/></svg>
<div class="dk" style="left:2043px;top:505px;line-height:18px;letter-spacing:0;word-spacing:0">CC Libraries</div>
<div class="a" style="left:1986px;top:538px;width:244px;height:1px;background:#3e3e3e"></div>
<svg style="left:2095px;top:544px" width="29" height="7" viewBox="0 0 29 7"><path d="M1 0 V7 M4 0 V7 M7 0 V7 M10 0 V7 M13 0 V7 M16 0 V7 M19 0 V7 M22 0 V7 M25 0 V7 M28 0 V7" stroke="#333" stroke-width="1.1"/></svg>
<svg style="left:2004px;top:563px" width="25" height="25" viewBox="0 0 25 25"><path d="M3 23.5 L7.5 6 C8.3 3 10 2.2 13.5 2.4 M3.5 10 H12.5 M11 20 L21.5 9.5 M13 10 L19.5 19.8" stroke="#c8c8c8" stroke-width="1.6" fill="none" stroke-linecap="round"/></svg>
<div class="dk" style="left:2043px;top:566px;line-height:18px">Effects</div>
<svg style="left:2003px;top:605px" width="27" height="26" viewBox="0 0 27 26"><path d="M8 1.5 H12 C12 4 15 4 15 1.5 H25.5 V12 C23 12 23 15 25.5 15 V20.5 H8 V15 C10.5 15 10.5 12 8 12 Z" stroke="#c8c8c8" stroke-width="1.5" fill="none"/><rect x="1" y="14" width="8" height="7" stroke="#c8c8c8" stroke-width="1.4" fill="#535353"/><rect x="4" y="17.5" width="8" height="7" stroke="#c8c8c8" stroke-width="1.4" fill="#535353"/></svg>
<div class="dk" style="left:2043px;top:608px;line-height:18px">Object Styles</div>
<div class="a" style="left:1986px;top:642px;width:244px;height:1px;background:#3e3e3e"></div>
<svg style="left:2095px;top:648px" width="29" height="7" viewBox="0 0 29 7"><path d="M1 0 V7 M4 0 V7 M7 0 V7 M10 0 V7 M13 0 V7 M16 0 V7 M19 0 V7 M22 0 V7 M25 0 V7 M28 0 V7" stroke="#333" stroke-width="1.1"/></svg>
<svg style="left:2003px;top:665px" width="27" height="27" viewBox="0 0 27 27"><path d="M19 1 H26 M20 1 V17 M24 1 V17" stroke="#c8c8c8" stroke-width="1.8" fill="none"/><path d="M20 1 C14 1 13 9 20 9 Z" fill="#c8c8c8"/><rect x="1" y="13" width="8" height="7" stroke="#c8c8c8" stroke-width="1.4" fill="#535353"/><rect x="4" y="17" width="8" height="7" stroke="#c8c8c8" stroke-width="1.4" fill="#535353"/></svg>
<div class="dk" style="left:2043px;top:670px;line-height:18px">Paragraph Styles</div>
<div class="a" style="left:1986px;top:703px;width:244px;height:1px;background:#3e3e3e"></div>
<svg style="left:2095px;top:709px" width="29" height="7" viewBox="0 0 29 7"><path d="M1 0 V7 M4 0 V7 M7 0 V7 M10 0 V7 M13 0 V7 M16 0 V7 M19 0 V7 M22 0 V7 M25 0 V7 M28 0 V7" stroke="#333" stroke-width="1.1"/></svg>
<svg style="left:2003px;top:727px" width="28" height="27" viewBox="0 0 28 27"><path d="M12 16 L19 1 L26.5 16 M15 10 H23" stroke="#c8c8c8" stroke-width="1.7" fill="none"/><rect x="1" y="15" width="8" height="7" stroke="#c8c8c8" stroke-width="1.4" fill="#535353"/><rect x="4" y="19" width="8" height="7" stroke="#c8c8c8" stroke-width="1.4" fill="#535353"/></svg>
<div class="dk" style="left:2043px;top:731px;line-height:18px">Character Styles</div>
<svg style="left:2007px;top:770px" width="18" height="26" viewBox="0 0 18 26"><path d="M7 1 H17 M9 1 V25 M14 1 V25" stroke="#c8c8c8" stroke-width="2" fill="none"/><path d="M9 1 C0 1 0 13 9 13 Z" fill="#c8c8c8"/></svg>
<div class="dk" style="left:2043px;top:773px;line-height:18px">Paragraph</div>
<div class="a" style="left:1986px;top:807px;width:244px;height:1px;background:#3e3e3e"></div>
<svg style="left:2095px;top:813px" width="29" height="7" viewBox="0 0 29 7"><path d="M1 0 V7 M4 0 V7 M7 0 V7 M10 0 V7 M13 0 V7 M16 0 V7 M19 0 V7 M22 0 V7 M25 0 V7 M28 0 V7" stroke="#333" stroke-width="1.1"/></svg>
<svg style="left:2004px;top:832px" width="25" height="24" viewBox="0 0 25 24"><rect x="3.5" y="3.5" width="18" height="17" stroke="#c8c8c8" stroke-width="1.5" fill="none" stroke-dasharray="3 2"/><g fill="#c8c8c8"><rect x="0" y="0" width="5" height="5"/><rect x="10" y="0" width="5" height="4"/><rect x="20" y="0" width="5" height="5"/><rect x="0" y="10" width="4" height="4"/><rect x="21" y="10" width="4" height="4"/><rect x="0" y="19" width="5" height="5"/><rect x="10" y="20" width="5" height="4"/><rect x="20" y="19" width="5" height="5"/><rect x="11" y="11" width="2.5" height="2.5"/></g></svg>
<div class="dk" style="left:2043px;top:835px;line-height:18px">Transform</div>
<div class="a" style="left:1986px;top:869px;width:244px;height:1px;background:#3e3e3e"></div>
</body></html>
